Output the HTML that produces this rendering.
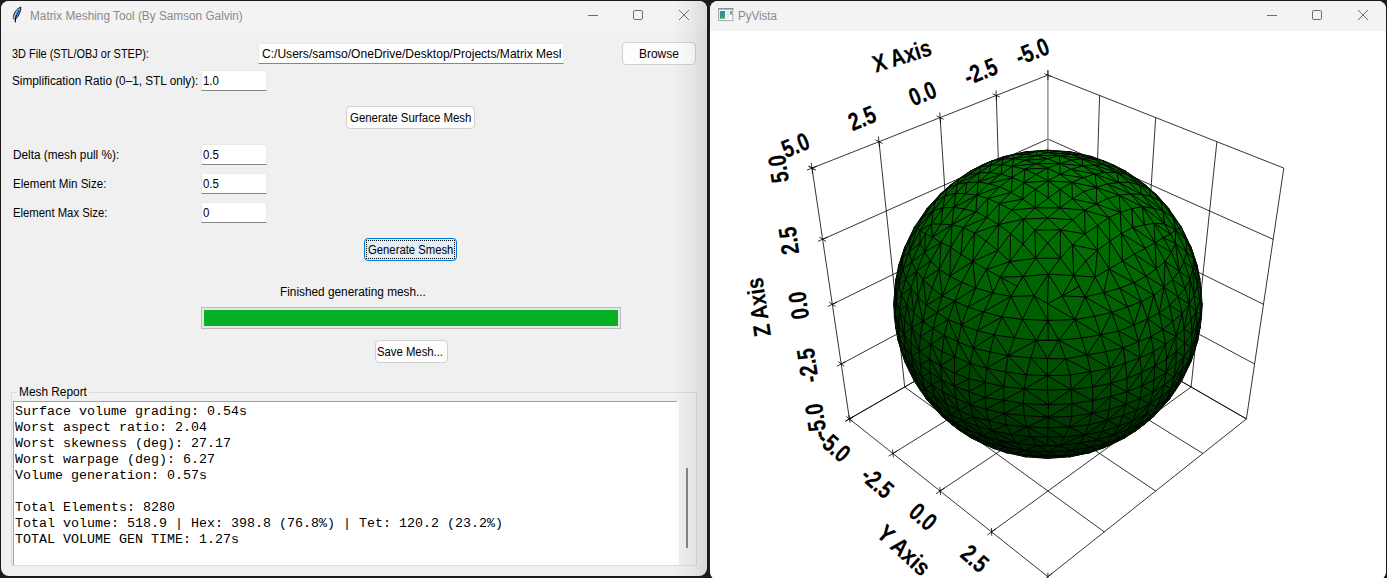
<!DOCTYPE html>
<html><head><meta charset='utf-8'><title>ui</title><style>
*{box-sizing:border-box;margin:0;padding:0}
html,body{width:1387px;height:578px;overflow:hidden;background:#1b1b1b;font-family:"Liberation Sans",sans-serif;}
.win{position:absolute;overflow:hidden}
#w1{left:1px;top:1px;width:706px;height:575px;border-radius:8px;background:#f0f0f0}
#w1 .tb{position:absolute;left:0;top:0;width:100%;height:30px;background:#f3f3f3}
#w2{left:710px;top:1px;width:676px;height:578.6px;border-radius:8px;background:#fff}
#w2 .tb{position:absolute;left:0;top:0;width:100%;height:30px;background:#f3f3f3}
.abs{position:absolute}
.t{position:absolute;white-space:pre;font-size:12px;line-height:16px;height:16px;transform-origin:0 50%;}
.entry{position:absolute;background:#fff;border:1px solid #e9e9e9;border-bottom:1px solid #868686;border-radius:2px 2px 0 0}
.btn{position:absolute;background:#fdfdfd;border:1px solid #d0d0d0;border-radius:4px}
.mono{position:absolute;left:15px;top:403.9px;transform:scaleY(0.9);transform-origin:0 0;font-family:"Liberation Mono",monospace;font-size:13.333px;line-height:17.778px;white-space:pre;color:#000}
</style></head><body>
<div class="win" id="w1"><div class="tb"></div></div>
<div class="win" id="w2"><div class="tb"></div></div>
<!-- left window content, page coordinates -->
<div class="entry" style="left:258px;top:43px;width:306px;height:21px"></div>
<div class="abs" style="left:260px;top:45px;width:301px;height:18px;overflow:hidden"><span class="t" id="pathtxt" style="left:2px;top:0.7px;transform:scaleX(1.0047)">C:/Users/samso/OneDrive/Desktop/Projects/Matrix Meshing</span></div>
<div class="entry" style="left:201px;top:70px;width:66px;height:21px"></div>
<div class="entry" style="left:201px;top:144px;width:66px;height:21px"></div>
<div class="entry" style="left:201px;top:173px;width:66px;height:21px"></div>
<div class="entry" style="left:201px;top:202px;width:66px;height:21px"></div>
<div class="btn" style="left:622px;top:42px;width:74px;height:23px"></div>
<div class="btn" style="left:346px;top:106px;width:129px;height:23px"></div>
<div class="btn" style="left:364px;top:238px;width:93px;height:23px;background:#e0eef9;border-color:#0078d4"></div>
<div class="abs" style="left:366px;top:240px;width:89px;height:19px;border:1px dotted #000;border-radius:1px"></div>
<div class="btn" style="left:375px;top:340px;width:73px;height:23px"></div>
<!-- progress -->
<div class="abs" style="left:201px;top:307px;width:420px;height:22px;background:#e6e6e6;border:1px solid #bcbcbc"></div>
<div class="abs" style="left:204px;top:310px;width:414px;height:16px;background:#06b025"></div>
<!-- group frame -->
<div class="abs" style="left:11px;top:392px;width:686px;height:174px;border:1px solid #dcdcdc"></div>
<div class="abs" style="left:17px;top:384px;width:72px;height:16px;background:#f0f0f0"></div>
<div class="abs" style="left:13px;top:401px;width:666px;height:164px;background:#fff;border-top:1px solid #a0a0a0;border-left:1px solid #a0a0a0"></div>
<div class="abs" style="left:677px;top:401px;width:2px;height:1px;background:#fff"></div>
<div class="abs" style="left:686px;top:468px;width:2px;height:80px;background:#858585"></div>
<div class="mono" style="top:403.9px">Surface volume grading: 0.54s</div>
<div class="mono" style="top:419.9px">Worst aspect ratio: 2.04</div>
<div class="mono" style="top:435.9px">Worst skewness (deg): 27.17</div>
<div class="mono" style="top:451.9px">Worst warpage (deg): 6.27</div>
<div class="mono" style="top:467.9px">Volume generation: 0.57s</div>
<div class="mono" style="top:499.9px">Total Elements: 8280</div>
<div class="mono" style="top:515.9px">Total volume: 518.9 | Hex: 398.8 (76.8%) | Tet: 120.2 (23.2%)</div>
<div class="mono" style="top:531.9px">TOTAL VOLUME GEN TIME: 1.27s</div>
<!-- shadow on right edge of left window -->
<div class="abs" style="left:672px;top:1px;width:35px;height:575px;border-radius:0 8px 8px 0;background:linear-gradient(90deg,rgba(0,0,0,0),rgba(0,0,0,0.035) 50%,rgba(0,0,0,0.10))"></div>
<span class='t' style='left:29.5px;top:8.0px;color:#8a8a8a;transform:scaleX(0.9828)'>Matrix Meshing Tool (By Samson Galvin)</span>
<span class='t' style='left:12.3px;top:45.8px;color:#000;transform:scaleX(0.9125)'>3D File (STL/OBJ or STEP):</span>
<span class='t' style='left:12.3px;top:72.8px;color:#000;transform:scaleX(0.9794)'>Simplification Ratio (0–1, STL only):</span>
<span class='t' style='left:12.5px;top:147.2px;color:#000;transform:scaleX(0.9829)'>Delta (mesh pull %):</span>
<span class='t' style='left:12.5px;top:176.2px;color:#000;transform:scaleX(0.9658)'>Element Min Size:</span>
<span class='t' style='left:12.5px;top:205.2px;color:#000;transform:scaleX(0.9436)'>Element Max Size:</span>
<span class='t' style='left:349.7px;top:109.7px;color:#000;transform:scaleX(0.9529)'>Generate Surface Mesh</span>
<span class='t' style='left:367.9px;top:241.5px;color:#000;transform:scaleX(0.9414)'>Generate Smesh</span>
<span class='t' style='left:639.2px;top:45.7px;color:#000;transform:scaleX(0.9946)'>Browse</span>
<span class='t' style='left:377.4px;top:343.7px;color:#000;transform:scaleX(0.9424)'>Save Mesh...</span>
<span class='t' style='left:280.4px;top:284.2px;color:#000;transform:scaleX(0.9852)'>Finished generating mesh...</span>
<span class='t' style='left:18.7px;top:384.1px;color:#000;transform:scaleX(0.9883)'>Mesh Report</span>
<span class='t' style='left:738.4px;top:8.0px;color:#8a8a8a;transform:scaleX(0.9637)'>PyVista</span>
<span class='t' style='left:203.2px;top:72.8px;color:#000;transform:scaleX(0.9550)'>1.0</span>
<span class='t' style='left:203.2px;top:147.2px;color:#000;transform:scaleX(0.9550)'>0.5</span>
<span class='t' style='left:203.2px;top:176.2px;color:#000;transform:scaleX(0.9550)'>0.5</span>
<span class='t' style='left:203.2px;top:205.2px;color:#000;transform:scaleX(0.9550)'>0</span>
<svg class="abs" style="left:0;top:0" width="1387" height="578" viewBox="0 0 1387 578">
<path d='M588 15.5h10' stroke='#6e6e6e' stroke-width='1' fill='none'/><rect x='633.5' y='10.5' width='9' height='9' rx='1.3' fill='none' stroke='#6e6e6e' stroke-width='1'/><path d='M679 10l10 10M689 10l-10 10' stroke='#6e6e6e' stroke-width='1' fill='none'/>
<path d='M1267 15.5h10' stroke='#6e6e6e' stroke-width='1' fill='none'/><rect x='1312.5' y='10.5' width='9' height='9' rx='1.3' fill='none' stroke='#6e6e6e' stroke-width='1'/><path d='M1358 10l10 10M1368 10l-10 10' stroke='#6e6e6e' stroke-width='1' fill='none'/>
<defs>
<linearGradient id="pvg" x1="0" y1="0" x2="0.6" y2="1"><stop offset="0" stop-color="#4f7fc4"/><stop offset="0.45" stop-color="#2f8f8f"/><stop offset="1" stop-color="#3fae4c"/></linearGradient>
<linearGradient id="pvg2" x1="0" y1="0" x2="0" y2="1"><stop offset="0" stop-color="#5a8fd0"/><stop offset="1" stop-color="#6fc46a"/></linearGradient>
</defs>
<g id="feather">
<path d="M20.9 7.1C17.4 8.2 13.5 12.6 13.2 18.4L15.3 19.3C18.6 16.5 20.9 11.6 20.9 7.1Z" fill="#4a90e8" stroke="#16181c" stroke-width="1" stroke-linejoin="round"/>
<path d="M20.3 7.9C17.4 9 14.3 12.8 13.9 17.9L14.8 18.3C15.2 14.2 17.4 10.4 20.3 7.9Z" fill="#9ccbff"/>
<path d="M18.6 10.8L15.9 16.6" stroke="#0b0b10" stroke-width="1.1" stroke-dasharray="1.3 1" fill="none"/>
<path d="M15.7 16.5L15.3 22.4" stroke="#000" stroke-width="1.1" fill="none"/>
<path d="M13.6 17.2L14.6 18.6" stroke="#fff" stroke-width="0.9"/>
</g>
<g id="pvicon">
<rect x="718.5" y="8.6" width="14.3" height="12" fill="#fdfdfd" stroke="#a3a8b0" stroke-width="1"/>
<rect x="718" y="8" width="15.3" height="1.6" fill="#8d9299"/>
<rect x="719.8" y="11" width="5.3" height="7.7" fill="url(#pvg)"/>
<rect x="726.7" y="11" width="2.2" height="7.7" fill="#e4e4e4"/>
<rect x="730" y="11" width="2" height="3.8" fill="url(#pvg2)"/>
</g>

<defs><clipPath id="vp"><rect x="710" y="31" width="676" height="547"/></clipPath><clipPath id="sc"><circle cx="1047.9" cy="304.3" r="153.6"/></clipPath>
<radialGradient id="sg" cx="0.5" cy="0.36" r="0.66" fx="0.5" fy="0.30"><stop offset="0" stop-color="#007200"/><stop offset="0.35" stop-color="#006800"/><stop offset="0.7" stop-color="#035003"/><stop offset="1" stop-color="#04380a"/></radialGradient></defs>
<g clip-path="url(#vp)">
<path d="M1047.9 304.3L1246.4 418.9M1047.9 304.3L849.4 418.9M1047.9 304.3L1246.4 418.9M1047.9 304.3L849.4 418.9M1003.6 329.9L1202.9 453.5M1092.3 329.9L892.9 453.5M1092.3 329.9L1099.6 95.5M1047.9 253.1L1254.6 364.0M1003.6 329.9L996.3 95.5M1047.9 253.1L841.3 364.0M956.0 357.4L1155.7 491.0M1139.9 357.4L940.1 491.0M1139.9 357.4L1155.7 117.6M1047.9 198.1L1263.5 304.3M956.0 357.4L940.1 117.6M1047.9 198.1L832.4 304.3M904.7 387.0L1104.3 531.9M1191.1 387.0L991.6 531.9M1191.1 387.0L1216.9 141.7M1047.9 139.0L1273.2 239.3M904.7 387.0L879.0 141.7M1047.9 139.0L822.7 239.3M849.4 418.9L1047.9 576.7M1246.4 418.9L1047.9 576.7M1246.4 418.9L1283.8 168.1M1047.9 75.1L1283.8 168.1M849.4 418.9L812.0 168.1M1047.9 75.1L812.0 168.1" stroke="#000" stroke-width="0.8" fill="none"/>
<path d="M1047.9 70.1L1047.9 304.3" stroke="#9a9a9a" stroke-width="1.6" fill="none"/>
<path d="M1047.9 79.9L1047.9 70.3M1051.5 76.5L1044.4 73.7M853.6 416.5L845.3 421.3M852.4 421.3L846.4 416.5M853.6 416.5L845.3 421.3M848.9 415.1L850.0 422.7M996.4 100.4L996.1 90.5M999.8 97.0L992.7 93.9M845.6 361.6L836.9 366.3M844.3 366.3L838.2 361.6M897.1 450.9L888.7 456.1M892.5 449.6L893.4 457.3M940.5 122.7L939.8 112.5M943.7 119.3L936.6 115.9M836.9 302.0L827.8 306.5M835.6 306.5L829.2 302.1M944.4 488.2L935.9 493.8M939.8 487.1L940.5 494.9M879.5 146.9L878.4 136.5M882.5 143.5L875.5 139.9M827.5 237.1L817.9 241.4M826.0 241.4L819.3 237.1M995.9 528.8L987.4 535.0M991.4 528.0L991.8 535.8M812.8 173.5L811.2 162.7M815.5 170.1L808.6 166.1M817.1 166.1L807.0 170.1M815.5 170.1L808.6 166.1M1052.2 573.3L1043.7 580.1M1047.9 572.7L1047.9 580.6" stroke="#000" stroke-width="0.8" fill="none"/>
<circle cx="1047.9" cy="304.3" r="153.6" fill="#004800"/>
<g clip-path="url(#sc)" shape-rendering="crispEdges">
<path d="M971.2 437.9L983.6 444.0L975.8 437.8ZM983.6 444.0L971.2 437.9L994.3 448.7ZM1035.1 456.3L1024.5 450.5L1047.5 455.6ZM1014.2 453.1L1035.1 456.3L1024.5 450.5ZM1014.2 453.1L1035.1 456.3L1020.6 455.4ZM989.5 443.0L983.6 444.0L998.1 449.2ZM989.5 443.0L983.6 444.0L975.8 437.8ZM962.5 431.2L975.8 437.8L968.2 429.8ZM962.5 431.2L971.2 437.9L975.8 437.8ZM962.5 431.2L955.4 423.0L945.0 416.5ZM962.5 431.2L951.5 424.2L945.0 416.5ZM960.0 430.8L951.5 424.2L971.2 437.9ZM962.5 431.2L951.5 424.2L971.2 437.9ZM934.7 408.0L951.5 424.2L945.0 416.5ZM1025.7 456.8L1035.1 456.3L1020.6 455.4ZM927.0 399.8L921.2 390.5L920.5 390.6ZM1047.6 458.4L1035.1 456.3L1060.5 456.2ZM1047.6 458.4L1025.7 456.8L1037.3 457.7ZM1047.6 458.4L1025.7 456.8L1035.1 456.3ZM1070.0 456.8L1047.6 458.4L1059.2 457.6ZM1048.3 451.8L1024.5 450.5L1047.5 455.6ZM983.0 435.7L989.5 443.0L975.8 437.8ZM1005.9 447.4L1014.2 453.1L1024.5 450.5ZM1005.9 447.4L1014.2 453.1L998.1 449.2ZM1005.9 447.4L989.5 443.0L998.1 449.2ZM998.1 449.2L983.6 444.0L1006.8 452.8ZM942.2 416.5L951.5 424.2L960.0 430.8ZM942.2 416.5L934.7 408.0L951.5 424.2ZM927.0 399.8L934.7 408.0L934.0 407.6ZM1097.5 449.3L1080.7 453.5L1090.2 447.3ZM1060.5 456.2L1080.7 453.5L1075.4 455.4ZM1060.5 456.2L1070.0 456.8L1075.4 455.4ZM1060.5 456.2L1080.7 453.5L1071.9 450.4ZM1047.5 455.6L1035.1 456.3L1060.5 456.2ZM1060.5 456.2L1070.0 456.8L1047.6 458.4ZM1060.5 456.2L1048.3 451.8L1047.5 455.6ZM1135.7 431.0L1144.9 423.8L1124.3 438.1ZM942.2 416.5L934.7 408.0L934.0 407.6ZM1089.1 452.8L1080.7 453.5L1075.4 455.4ZM1089.1 452.8L1097.5 449.3L1080.7 453.5ZM1089.1 452.8L1070.0 456.8L1080.8 454.7ZM1089.1 452.8L1070.0 456.8L1075.4 455.4ZM1111.3 444.4L1097.5 449.3L1120.5 437.7ZM994.3 448.7L983.6 444.0L1006.8 452.8ZM1006.8 452.8L1014.2 453.1L998.1 449.2ZM1006.8 452.8L1014.2 453.1L1025.7 456.8ZM1020.6 455.4L1014.2 453.1L1025.7 456.8ZM1006.8 452.8L1014.8 454.6L1025.7 456.8ZM1111.3 444.4L1102.2 448.5L1124.3 438.1ZM1097.5 449.3L1089.1 452.8L1111.3 444.4ZM1102.2 448.5L1089.1 452.8L1111.3 444.4ZM1124.3 438.1L1133.4 431.3L1111.3 444.4Z" fill="#001e00" stroke="#001e00" stroke-width="0.6"/>
<path d="M914.6 381.5L921.2 390.5L920.5 390.6ZM962.5 431.2L955.4 423.0L968.2 429.8ZM934.7 408.0L927.0 399.8L921.2 390.5ZM1080.7 453.5L1071.9 450.4L1090.2 447.3ZM989.5 443.0L983.0 435.7L1005.9 447.4ZM983.0 435.7L975.8 437.8L968.2 429.8ZM1097.5 449.3L1106.5 443.0L1090.2 447.3ZM1060.5 456.2L1048.3 451.8L1071.9 450.4ZM1135.7 431.0L1144.9 423.8L1153.9 416.3ZM1106.5 443.0L1097.5 449.3L1120.5 437.7ZM929.3 398.9L934.7 408.0L945.0 416.5ZM1133.4 431.3L1144.9 423.8L1124.3 438.1ZM1120.5 437.7L1133.4 431.3L1111.3 444.4Z" fill="#002000" stroke="#002000" stroke-width="0.6"/>
<path d="M950.7 414.5L955.4 423.0L945.0 416.5ZM1048.3 451.8L1037.7 445.5L1024.5 450.5ZM998.5 440.1L983.0 435.7L1005.9 447.4ZM1005.9 447.4L1024.5 450.5L998.5 440.1ZM929.3 398.9L934.7 408.0L921.2 390.5Z" fill="#002200" stroke="#002200" stroke-width="0.6"/>
<path d="M968.2 429.8L962.6 420.5L983.0 435.7ZM962.6 420.5L955.4 423.0L968.2 429.8ZM921.2 390.5L914.6 381.5L917.0 380.6ZM914.6 381.5L909.3 371.2L909.8 370.8ZM950.7 414.5L938.2 406.2L945.0 416.5ZM1016.9 443.4L1037.7 445.5L1024.5 450.5ZM1080.1 442.9L1071.9 450.4L1090.2 447.3ZM1016.9 443.4L1024.5 450.5L998.5 440.1ZM1058.7 445.7L1048.3 451.8L1071.9 450.4ZM929.3 398.9L938.2 406.2L945.0 416.5Z" fill="#002400" stroke="#002400" stroke-width="0.6"/>
<path d="M909.8 370.8L914.6 381.5L917.0 380.6ZM1153.9 416.3L1160.8 408.3L1161.4 408.1ZM1160.8 408.3L1144.9 423.8L1153.9 416.3ZM904.9 361.7L909.3 371.2L909.8 370.8ZM950.7 414.5L962.6 420.5L955.4 423.0ZM1097.1 439.7L1106.5 443.0L1090.2 447.3ZM1048.3 451.8L1037.7 445.5L1058.7 445.7ZM983.0 435.7L992.5 430.8L998.5 440.1ZM1058.7 445.7L1080.1 442.9L1071.9 450.4ZM1133.4 431.3L1120.5 437.7L1140.3 423.1ZM1120.5 437.7L1113.3 435.2L1106.5 443.0ZM1144.9 423.8L1151.6 415.9L1133.4 431.3ZM929.3 398.9L921.2 390.5L925.0 388.8Z" fill="#002600" stroke="#002600" stroke-width="0.6"/>
<path d="M1160.8 408.3L1144.9 423.8L1151.6 415.9ZM1169.0 399.7L1160.8 408.3L1161.4 408.1ZM904.9 361.7L901.5 350.3L901.2 350.5ZM998.5 440.1L992.5 430.8L1016.9 443.4ZM1031.0 436.8L1016.9 443.4L1037.7 445.5ZM1080.1 442.9L1097.1 439.7L1090.2 447.3ZM977.5 426.0L962.6 420.5L983.0 435.7ZM983.0 435.7L992.5 430.8L977.5 426.0ZM1113.3 435.2L1097.1 439.7L1106.5 443.0ZM1047.9 445.6L1037.7 445.5L1058.7 445.7ZM1120.5 437.7L1113.3 435.2L1127.4 429.7ZM1140.3 423.1L1151.6 415.9L1133.4 431.3ZM1127.4 429.7L1120.5 437.7L1140.3 423.1ZM938.2 406.2L950.7 414.5L934.5 396.0ZM938.2 406.2L934.5 396.0L929.3 398.9ZM917.0 380.6L921.2 390.5L925.0 388.8Z" fill="#002800" stroke="#002800" stroke-width="0.6"/>
<path d="M906.6 359.6L917.0 380.6L909.8 370.8ZM897.8 339.4L901.5 350.3L901.2 350.5ZM909.8 370.8L906.6 359.6L904.9 361.7ZM1010.8 434.6L992.5 430.8L1016.9 443.4ZM1037.7 445.5L1031.0 436.8L1047.9 445.6ZM1031.0 436.8L1016.9 443.4L1010.8 434.6ZM1080.1 442.9L1085.1 434.6L1058.7 445.7ZM958.9 410.3L950.7 414.5L962.6 420.5ZM1058.7 445.7L1047.9 445.6L1047.5 437.0ZM925.0 388.8L934.5 396.0L929.3 398.9ZM946.1 403.8L950.7 414.5L934.5 396.0Z" fill="#002a00" stroke="#002a00" stroke-width="0.6"/>
<path d="M1160.8 408.3L1175.0 390.2L1169.0 399.7ZM901.5 350.3L906.6 359.6L904.9 361.7ZM977.5 426.0L992.5 430.8L973.5 416.7ZM1127.4 429.7L1132.6 420.8L1113.3 435.2ZM1080.1 442.9L1097.1 439.7L1085.1 434.6ZM1047.5 437.0L1031.0 436.8L1047.9 445.6ZM1169.0 399.7L1175.5 390.5L1175.0 390.2ZM1166.6 399.0L1160.8 408.3L1151.6 415.9ZM1102.2 431.4L1113.3 435.2L1097.1 439.7ZM1064.3 436.9L1085.1 434.6L1058.7 445.7ZM1058.7 445.7L1064.3 436.9L1047.5 437.0ZM1140.3 423.1L1146.4 413.9L1151.6 415.9ZM1140.3 423.1L1127.4 429.7L1146.4 413.9ZM925.0 388.8L917.0 380.6L913.5 368.6ZM946.1 403.8L958.9 410.3L950.7 414.5ZM973.5 416.7L962.6 420.5L977.5 426.0ZM973.5 416.7L958.9 410.3L962.6 420.5Z" fill="#002c00" stroke="#002c00" stroke-width="0.6"/>
<path d="M1146.4 413.9L1151.6 415.9L1156.7 406.8ZM906.6 359.6L917.0 380.6L913.5 368.6ZM901.5 350.3L895.8 327.6L897.8 339.4ZM1181.5 381.2L1175.5 390.5L1175.0 390.2ZM1166.6 399.0L1160.8 408.3L1175.0 390.2ZM1166.6 399.0L1151.6 415.9L1156.7 406.8ZM897.8 339.4L895.8 327.6L896.4 328.4ZM1006.8 424.9L992.5 430.8L1010.8 434.6ZM1119.1 426.0L1132.6 420.8L1113.3 435.2ZM1102.2 431.4L1097.1 439.7L1085.1 434.6ZM1102.2 431.4L1113.3 435.2L1119.1 426.0ZM1132.6 420.8L1127.4 429.7L1146.4 413.9ZM934.5 396.0L931.6 384.7L946.1 403.8ZM925.0 388.8L921.9 377.0L913.5 368.6ZM934.5 396.0L931.6 384.7L925.0 388.8ZM988.9 420.8L992.5 430.8L973.5 416.7Z" fill="#002e00" stroke="#002e00" stroke-width="0.6"/>
<path d="M906.6 359.6L904.6 346.9L913.5 368.6ZM1031.0 436.8L1026.8 426.9L1010.8 434.6ZM1047.9 427.8L1064.3 436.9L1047.5 437.0ZM1031.0 436.8L1047.5 437.0L1026.8 426.9ZM899.5 338.5L901.5 350.3L895.8 327.6ZM906.6 359.6L904.6 346.9L901.5 350.3ZM1006.8 424.9L992.5 430.8L988.9 420.8ZM1006.8 424.9L1026.8 426.9L1010.8 434.6ZM921.9 377.0L931.6 384.7L925.0 388.8ZM946.1 403.8L958.9 410.3L942.7 391.4Z" fill="#003000" stroke="#003000" stroke-width="0.6"/>
<path d="M1149.6 403.8L1146.4 413.9L1156.7 406.8ZM1132.6 420.8L1149.6 403.8L1146.4 413.9ZM1132.6 420.8L1119.1 426.0L1122.8 415.6ZM1047.9 427.8L1047.5 437.0L1026.8 426.9ZM1175.0 390.2L1181.5 381.2L1179.3 380.1ZM921.9 377.0L913.5 368.6L911.6 356.3ZM1166.6 399.0L1170.8 388.9L1156.7 406.8ZM1166.6 399.0L1179.3 380.1L1175.0 390.2ZM899.5 338.5L904.6 346.9L901.5 350.3ZM1102.2 431.4L1107.3 420.2L1119.1 426.0ZM1186.5 371.4L1191.1 361.3L1181.5 381.2ZM942.7 391.4L931.6 384.7L946.1 403.8ZM955.9 398.4L958.9 410.3L942.7 391.4ZM973.5 416.7L970.3 404.6L958.9 410.3ZM973.5 416.7L988.9 420.8L970.3 404.6ZM1102.2 431.4L1085.1 434.6L1107.3 420.2ZM1069.3 427.0L1064.3 436.9L1085.1 434.6Z" fill="#003200" stroke="#003200" stroke-width="0.6"/>
<path d="M1149.6 403.8L1161.1 396.4L1156.7 406.8ZM1170.8 388.9L1161.1 396.4L1156.7 406.8ZM895.8 327.6L895.2 314.4L899.5 338.5ZM911.6 356.3L904.6 346.9L913.5 368.6ZM1107.3 420.2L1119.1 426.0L1122.8 415.6ZM1191.1 361.3L1181.5 381.2L1185.9 371.4ZM931.6 384.7L930.0 372.3L921.9 377.0ZM921.9 377.0L920.4 364.6L911.6 356.3ZM1185.9 371.4L1181.5 381.2L1179.3 380.1ZM1166.6 399.0L1179.3 380.1L1170.8 388.9ZM894.4 317.4L895.2 314.4L893.8 304.2ZM894.4 317.4L895.8 327.6L895.2 314.4ZM1006.8 424.9L1004.2 413.6L988.9 420.8ZM1006.8 424.9L1026.8 426.9L1004.2 413.6ZM1136.9 410.3L1132.6 420.8L1122.8 415.6ZM1136.9 410.3L1132.6 420.8L1149.6 403.8ZM970.3 404.6L958.9 410.3L955.9 398.4ZM986.2 409.3L988.9 420.8L970.3 404.6ZM1088.6 424.8L1085.1 434.6L1107.3 420.2ZM1069.3 427.0L1047.9 427.8L1064.3 436.9ZM1069.3 427.0L1088.6 424.8L1085.1 434.6Z" fill="#003400" stroke="#003400" stroke-width="0.6"/>
<path d="M904.6 346.9L911.6 356.3L904.1 334.4ZM920.4 364.6L930.0 372.3L921.9 377.0ZM898.8 325.1L895.2 314.4L899.5 338.5ZM904.6 346.9L904.1 334.4L899.5 338.5ZM930.0 372.3L931.6 384.7L941.6 379.6ZM942.7 391.4L955.9 398.4L941.6 379.6ZM986.2 409.3L1004.2 413.6L988.9 420.8ZM942.7 391.4L931.6 384.7L941.6 379.6ZM1048.1 417.2L1047.9 427.8L1026.8 426.9ZM1069.3 427.0L1048.1 417.2L1047.9 427.8Z" fill="#003600" stroke="#003600" stroke-width="0.6"/>
<path d="M893.8 304.2L895.2 314.4L894.8 290.2ZM920.4 364.6L911.6 356.3L919.4 351.2ZM898.8 325.1L904.1 334.4L899.5 338.5ZM1179.3 380.1L1170.8 388.9L1182.2 369.0ZM1161.1 396.4L1170.8 388.9L1164.2 384.8ZM1024.2 415.5L1026.8 426.9L1004.2 413.6ZM1189.0 360.5L1179.3 380.1L1185.9 371.4ZM955.9 398.4L970.3 404.6L954.4 386.1ZM1191.1 361.3L1194.5 350.0L1194.6 350.6ZM1194.5 350.0L1191.1 361.3L1185.9 371.4ZM1198.0 339.8L1194.5 350.0L1194.6 350.6ZM986.2 409.3L970.3 404.6L985.1 397.5ZM954.4 386.1L955.9 398.4L941.6 379.6ZM1122.8 415.6L1126.0 404.2L1107.3 420.2ZM1088.6 424.8L1092.3 413.3L1107.3 420.2ZM1088.6 424.8L1092.3 413.3L1069.3 427.0ZM1048.1 417.2L1026.8 426.9L1024.2 415.5Z" fill="#003800" stroke="#003800" stroke-width="0.6"/>
<path d="M930.0 372.3L929.6 359.4L941.6 379.6ZM895.2 314.4L898.8 325.1L896.1 299.8ZM910.9 342.9L911.6 356.3L919.4 351.2ZM920.4 364.6L929.6 359.4L930.0 372.3ZM1161.1 396.4L1149.6 403.8L1164.2 384.8ZM910.9 342.9L911.6 356.3L904.1 334.4ZM1174.0 377.3L1170.8 388.9L1182.2 369.0ZM1174.0 377.3L1170.8 388.9L1164.2 384.8ZM894.8 290.2L893.8 304.2L895.9 279.5ZM1136.9 410.3L1149.6 403.8L1140.1 398.6ZM1136.9 410.3L1126.0 404.2L1122.8 415.6ZM1189.0 360.5L1179.3 380.1L1182.2 369.0ZM970.3 404.6L968.9 391.5L985.1 397.5ZM968.9 391.5L970.3 404.6L954.4 386.1ZM1194.5 350.0L1189.0 360.5L1185.9 371.4ZM1004.2 413.6L1003.7 400.2L986.2 409.3ZM1109.0 409.5L1092.3 413.3L1107.3 420.2ZM1109.0 409.5L1126.0 404.2L1107.3 420.2ZM1071.7 416.4L1092.3 413.3L1069.3 427.0ZM1069.3 427.0L1048.1 417.2L1071.7 416.4Z" fill="#003a00" stroke="#003a00" stroke-width="0.6"/>
<path d="M899.6 310.8L898.8 325.1L896.1 299.8ZM920.4 364.6L929.6 359.4L919.4 351.2ZM1149.6 403.8L1153.0 392.2L1140.1 398.6ZM898.8 325.1L899.6 310.8L904.1 334.4ZM896.1 299.8L895.2 314.4L894.8 290.2ZM1153.0 392.2L1149.6 403.8L1164.2 384.8ZM1004.2 413.6L1023.3 403.5L1024.2 415.5ZM985.1 397.5L1003.7 400.2L986.2 409.3ZM1003.7 400.2L1004.2 413.6L1023.3 403.5ZM1136.9 410.3L1126.0 404.2L1140.1 398.6ZM1198.0 339.8L1200.1 327.3L1199.3 329.5ZM1194.5 350.0L1198.0 339.8L1200.1 327.3ZM941.6 379.6L940.5 365.7L954.4 386.1ZM1024.2 415.5L1023.3 403.5L1048.1 417.2Z" fill="#003c00" stroke="#003c00" stroke-width="0.6"/>
<path d="M894.8 290.2L895.9 279.5L897.6 274.7ZM894.8 290.2L897.6 274.7L896.1 299.8ZM910.9 342.9L919.4 351.2L911.6 327.5ZM1182.2 369.0L1184.1 356.4L1189.0 360.5ZM904.8 319.6L899.6 310.8L904.1 334.4ZM904.1 334.4L910.9 342.9L911.6 327.5ZM1174.0 377.3L1184.1 356.4L1182.2 369.0ZM985.1 397.5L968.9 391.5L985.3 382.6ZM968.9 391.5L968.9 378.8L954.4 386.1ZM1092.3 413.3L1072.0 403.6L1071.7 416.4ZM1194.5 350.0L1196.3 338.0L1189.0 360.5ZM940.5 365.7L929.6 359.4L941.6 379.6ZM954.4 373.1L940.5 365.7L954.4 386.1ZM1071.7 416.4L1072.0 403.6L1048.1 417.2ZM1109.0 409.5L1111.0 396.3L1092.3 413.3ZM1048.5 404.8L1023.3 403.5L1048.1 417.2Z" fill="#003e00" stroke="#003e00" stroke-width="0.6"/>
<path d="M931.1 344.5L929.6 359.4L940.5 365.7ZM896.1 299.8L899.6 310.8L901.5 295.1ZM895.9 279.5L898.6 266.0L897.6 274.7ZM920.3 336.7L919.4 351.2L911.6 327.5ZM929.6 359.4L919.4 351.2L931.1 344.5ZM1140.1 398.6L1141.9 385.8L1153.0 392.2ZM1164.2 384.8L1153.0 392.2L1166.0 372.6ZM904.1 334.4L904.8 319.6L911.6 327.5ZM1174.0 377.3L1184.1 356.4L1175.9 364.1ZM1174.0 377.3L1164.2 384.8L1166.0 372.6ZM968.9 378.8L968.9 391.5L985.3 382.6ZM954.4 373.1L968.9 378.8L954.4 386.1ZM1003.7 400.2L985.1 397.5L1004.0 386.6ZM1191.4 347.2L1184.1 356.4L1189.0 360.5ZM1126.9 391.8L1126.0 404.2L1140.1 398.6ZM1191.4 347.2L1196.3 338.0L1189.0 360.5ZM1194.5 350.0L1200.1 327.3L1196.3 338.0ZM1109.0 409.5L1111.0 396.3L1126.0 404.2ZM1093.0 400.6L1092.3 413.3L1072.0 403.6ZM1093.0 400.6L1111.0 396.3L1092.3 413.3ZM1048.5 404.8L1072.0 403.6L1048.1 417.2Z" fill="#004000" stroke="#004000" stroke-width="0.6"/>
<path d="M904.8 319.6L907.0 304.9L899.6 310.8ZM898.7 285.4L896.1 299.8L901.5 295.1ZM898.7 285.4L897.6 274.7L896.1 299.8ZM920.3 336.7L919.4 351.2L931.1 344.5ZM1154.0 379.9L1153.0 392.2L1166.0 372.6ZM1154.0 379.9L1141.9 385.8L1153.0 392.2ZM954.4 373.1L940.5 365.7L954.8 356.9ZM1174.0 377.3L1175.9 364.1L1166.0 372.6ZM898.6 266.0L901.4 257.4L903.1 253.0ZM1023.3 403.5L1024.2 388.9L1003.7 400.2ZM1023.3 403.5L1024.2 388.9L1048.5 404.8ZM985.3 382.6L985.1 397.5L1004.0 386.6ZM1201.5 317.0L1202.1 303.9L1200.1 327.3ZM1126.9 391.8L1111.0 396.3L1126.0 404.2ZM1126.9 391.8L1141.9 385.8L1140.1 398.6Z" fill="#004200" stroke="#004200" stroke-width="0.6"/>
<path d="M907.0 304.9L899.6 310.8L901.5 295.1ZM902.5 257.9L898.6 266.0L897.6 274.7ZM897.6 274.7L902.5 257.9L898.7 285.4ZM1200.1 327.3L1196.3 338.0L1200.6 314.6ZM904.8 319.6L911.6 327.5L907.0 304.9ZM920.3 336.7L922.9 321.4L911.6 327.5ZM1004.0 386.6L1024.2 388.9L1003.7 400.2ZM904.8 247.1L901.4 257.4L903.1 253.0ZM942.1 351.5L931.1 344.5L940.5 365.7ZM942.1 351.5L940.5 365.7L954.8 356.9ZM970.1 363.2L954.4 373.1L968.9 378.8ZM1184.1 356.4L1184.7 343.1L1191.4 347.2ZM1196.3 338.0L1197.1 325.1L1191.4 347.2ZM985.3 382.6L970.1 363.2L968.9 378.8ZM1200.6 314.6L1202.1 303.9L1200.1 327.3ZM1072.0 403.6L1071.2 389.4L1093.0 400.6ZM1047.5 390.2L1024.2 388.9L1048.5 404.8ZM1048.5 404.8L1071.2 389.4L1072.0 403.6ZM1093.0 400.6L1110.6 383.4L1111.0 396.3Z" fill="#004400" stroke="#004400" stroke-width="0.6"/>
<path d="M1175.9 364.1L1184.1 356.4L1176.3 351.3ZM913.8 312.6L922.9 321.4L911.6 327.5ZM913.8 312.6L911.6 327.5L907.0 304.9ZM931.1 344.5L933.1 328.6L920.3 336.7ZM1184.7 343.1L1184.1 356.4L1176.3 351.3ZM905.7 279.2L898.7 285.4L901.5 295.1ZM970.1 363.2L954.4 373.1L954.8 356.9ZM1191.9 334.1L1197.1 325.1L1191.4 347.2ZM1191.9 334.1L1184.7 343.1L1191.4 347.2ZM903.1 253.0L902.5 257.9L898.6 266.0ZM985.3 382.6L986.7 368.3L1004.0 386.6ZM1197.1 325.1L1196.3 338.0L1200.6 314.6ZM1111.0 396.3L1126.9 391.8L1110.6 383.4ZM1126.9 391.8L1141.5 372.5L1141.9 385.8ZM1048.5 404.8L1071.2 389.4L1047.5 390.2ZM1093.0 400.6L1110.6 383.4L1092.4 387.2ZM1092.4 387.2L1071.2 389.4L1093.0 400.6ZM1175.9 364.1L1166.0 372.6L1176.3 351.3ZM1154.0 379.9L1166.0 372.6L1154.7 365.9ZM1154.7 365.9L1154.0 379.9L1141.9 385.8Z" fill="#004600" stroke="#004600" stroke-width="0.6"/>
<path d="M922.9 321.4L933.1 328.6L920.3 336.7ZM1004.0 386.6L1005.6 371.9L1024.2 388.9ZM902.9 269.1L902.5 257.9L898.7 285.4ZM904.8 247.1L909.7 236.9L914.5 227.1ZM905.7 279.2L898.7 285.4L902.9 269.1ZM986.7 368.3L1004.0 386.6L1005.6 371.9ZM903.1 253.0L902.5 257.9L904.8 247.1ZM911.0 287.6L907.0 304.9L901.5 295.1ZM1047.5 390.2L1024.2 388.9L1047.4 375.7ZM985.3 382.6L970.1 363.2L986.7 368.3ZM944.3 335.2L942.1 351.5L931.1 344.5ZM944.3 335.2L942.1 351.5L954.8 356.9ZM1200.6 314.6L1199.8 300.1L1202.1 303.9ZM1201.0 289.6L1200.9 291.8L1202.1 303.9ZM1126.9 391.8L1127.1 378.3L1141.5 372.5ZM1127.1 378.3L1126.9 391.8L1110.6 383.4ZM1166.5 359.1L1166.0 372.6L1176.3 351.3ZM1154.7 365.9L1141.5 372.5L1141.9 385.8ZM1166.5 359.1L1166.0 372.6L1154.7 365.9Z" fill="#004800" stroke="#004800" stroke-width="0.6"/>
<path d="M1197.1 325.1L1196.2 311.5L1191.9 334.1ZM907.0 304.9L913.8 312.6L911.0 287.6ZM913.8 312.6L917.9 296.6L922.9 321.4ZM970.1 363.2L986.7 368.3L973.4 348.1ZM970.1 363.2L954.8 356.9L958.1 341.9ZM1026.4 374.8L1005.6 371.9L1024.2 388.9ZM1183.9 329.1L1191.9 334.1L1184.7 343.1ZM910.1 239.2L902.5 257.9L904.8 247.1ZM911.0 287.6L905.7 279.2L901.5 295.1ZM1026.4 374.8L1024.2 388.9L1047.4 375.7ZM944.3 335.2L931.1 344.5L933.1 328.6ZM944.3 335.2L954.8 356.9L958.1 341.9ZM1200.6 314.6L1197.1 325.1L1196.2 311.5ZM1200.6 314.6L1199.8 300.1L1196.2 311.5ZM1201.0 289.6L1199.8 300.1L1202.1 303.9ZM1110.6 383.4L1092.4 387.2L1110.1 368.3ZM1071.2 389.4L1092.4 387.2L1090.7 371.7ZM1047.5 390.2L1047.4 375.7L1071.2 389.4Z" fill="#004a00" stroke="#004a00" stroke-width="0.6"/>
<path d="M909.2 251.8L902.5 257.9L910.1 239.2ZM909.2 251.8L902.5 257.9L902.9 269.1ZM926.3 305.2L917.9 296.6L922.9 321.4ZM1092.4 387.2L1090.7 371.7L1110.1 368.3ZM904.8 247.1L914.5 227.1L910.1 239.2ZM1005.6 371.9L1008.2 355.7L986.7 368.3ZM970.1 363.2L958.1 341.9L973.4 348.1ZM1191.1 320.0L1196.2 311.5L1191.9 334.1ZM1026.4 374.8L1008.2 355.7L1005.6 371.9ZM1183.9 329.1L1191.9 334.1L1191.1 320.0ZM911.8 261.9L905.7 279.2L902.9 269.1ZM917.9 296.6L913.8 312.6L911.0 287.6ZM1139.8 357.8L1127.1 378.3L1141.5 372.5ZM1070.2 375.0L1047.4 375.7L1071.2 389.4ZM1175.9 336.2L1176.3 351.3L1184.7 343.1ZM1175.9 336.2L1183.9 329.1L1184.7 343.1ZM1125.3 363.1L1110.6 383.4L1127.1 378.3ZM1198.4 275.2L1201.0 289.6L1199.9 278.9ZM1071.2 389.4L1090.7 371.7L1070.2 375.0ZM1176.3 351.3L1175.9 336.2L1166.5 359.1ZM933.1 328.6L922.9 321.4L937.1 312.5ZM1154.7 365.9L1153.6 351.6L1141.5 372.5ZM1154.7 365.9L1166.5 359.1L1165.7 344.2Z" fill="#004c00" stroke="#004c00" stroke-width="0.6"/>
<path d="M920.6 218.1L914.5 227.1L927.0 208.7ZM926.3 305.2L922.9 321.4L937.1 312.5ZM990.1 351.9L1008.2 355.7L986.7 368.3ZM986.7 368.3L990.1 351.9L973.4 348.1ZM1026.4 374.8L1030.8 357.8L1047.4 375.7ZM911.8 261.9L909.2 251.8L902.9 269.1ZM911.0 287.6L905.7 279.2L916.6 271.0ZM1201.0 289.6L1199.8 300.1L1197.5 285.1ZM1125.3 363.1L1139.8 357.8L1127.1 378.3ZM1125.3 363.1L1110.6 383.4L1110.1 368.3ZM1198.4 275.2L1199.9 278.9L1197.2 265.7ZM948.2 319.5L944.3 335.2L958.1 341.9ZM944.3 335.2L933.1 328.6L948.2 319.5ZM1153.6 351.6L1139.8 357.8L1141.5 372.5ZM1165.7 344.2L1175.9 336.2L1166.5 359.1ZM1154.7 365.9L1153.6 351.6L1165.7 344.2Z" fill="#004e00" stroke="#004e00" stroke-width="0.6"/>
<path d="M914.5 227.1L910.1 239.2L917.2 228.2ZM1191.1 320.0L1189.2 304.2L1196.2 311.5ZM1047.4 375.7L1070.2 375.0L1065.6 358.8ZM917.9 296.6L926.3 305.2L923.2 279.6ZM961.4 324.9L958.1 341.9L973.4 348.1ZM1191.1 320.0L1189.2 304.2L1183.9 329.1ZM910.1 239.2L917.2 228.2L909.2 251.8ZM1199.8 300.1L1194.0 295.4L1196.2 311.5ZM1199.8 300.1L1194.0 295.4L1197.5 285.1ZM1026.4 374.8L1008.2 355.7L1030.8 357.8ZM1047.5 358.6L1047.4 375.7L1065.6 358.8ZM1047.5 358.6L1030.8 357.8L1047.4 375.7ZM1070.2 375.0L1065.6 358.8L1090.7 371.7ZM911.8 261.9L905.7 279.2L916.6 271.0ZM911.0 287.6L917.9 296.6L916.6 271.0ZM1090.7 371.7L1110.1 368.3L1086.9 355.1ZM1175.9 336.2L1183.9 329.1L1182.3 313.3ZM1198.4 275.2L1201.0 289.6L1197.5 285.1ZM948.2 319.5L961.4 324.9L958.1 341.9ZM937.1 312.5L933.1 328.6L948.2 319.5Z" fill="#005000" stroke="#005000" stroke-width="0.6"/>
<path d="M914.5 227.1L922.3 218.0L927.0 208.7ZM914.5 227.1L922.3 218.0L917.2 228.2ZM1194.7 258.3L1191.1 247.3L1197.2 265.7ZM1194.0 295.4L1189.2 304.2L1196.2 311.5ZM932.2 287.9L926.3 305.2L923.2 279.6ZM994.2 334.9L1008.2 355.7L990.1 351.9ZM1086.9 355.1L1065.6 358.8L1090.7 371.7ZM1182.3 313.3L1189.2 304.2L1183.9 329.1ZM911.8 261.9L920.1 243.3L909.2 251.8ZM923.2 279.6L917.9 296.6L916.6 271.0ZM977.5 330.7L961.4 324.9L973.4 348.1ZM977.5 330.7L973.4 348.1L994.2 334.9ZM990.1 351.9L973.4 348.1L994.2 334.9ZM1105.9 351.7L1110.1 368.3L1086.9 355.1ZM1105.9 351.7L1123.3 347.8L1110.1 368.3ZM1175.9 336.2L1172.8 321.6L1182.3 313.3ZM1125.3 363.1L1123.3 347.8L1110.1 368.3ZM1125.3 363.1L1139.8 357.8L1123.3 347.8ZM1197.2 265.7L1192.6 252.4L1198.4 275.2ZM1165.7 344.2L1175.9 336.2L1162.8 329.6ZM937.1 312.5L942.3 295.9L926.3 305.2ZM1153.6 351.6L1151.0 336.6L1139.8 357.8ZM1153.6 351.6L1165.7 344.2L1151.0 336.6Z" fill="#005200" stroke="#005200" stroke-width="0.6"/>
<path d="M1197.5 285.1L1192.9 268.9L1194.0 295.4ZM1192.6 252.4L1191.1 247.3L1197.2 265.7ZM920.1 230.4L920.1 243.3L909.2 251.8ZM920.1 230.4L917.2 228.2L909.2 251.8ZM931.0 204.7L922.3 218.0L927.0 208.7ZM994.2 334.9L1008.2 355.7L1014.4 337.9ZM1193.5 258.3L1192.6 252.4L1198.4 275.2ZM1030.8 357.8L1008.2 355.7L1036.4 340.4ZM1047.5 358.6L1058.8 340.2L1065.6 358.8ZM1047.5 358.6L1036.4 340.4L1030.8 357.8ZM924.7 252.1L911.8 261.9L916.6 271.0ZM940.3 194.0L933.9 201.0L927.0 208.7ZM942.3 295.9L926.3 305.2L932.2 287.9ZM1198.4 275.2L1197.5 285.1L1193.5 258.3ZM1138.5 341.7L1139.8 357.8L1123.3 347.8ZM948.2 319.5L954.8 301.1L961.4 324.9ZM942.3 295.9L954.8 301.1L937.1 312.5ZM1172.8 321.6L1175.9 336.2L1162.8 329.6ZM1151.0 336.6L1138.5 341.7L1139.8 357.8ZM948.2 319.5L954.8 301.1L937.1 312.5ZM1162.8 329.6L1165.7 344.2L1151.0 336.6Z" fill="#005400" stroke="#005400" stroke-width="0.6"/>
<path d="M1190.2 279.2L1192.9 268.9L1194.0 295.4ZM1194.0 295.4L1189.2 304.2L1190.2 279.2ZM1182.3 313.3L1178.1 296.8L1189.2 304.2ZM923.2 279.6L916.6 271.0L930.6 261.1ZM923.2 279.6L939.3 269.2L932.2 287.9ZM1014.4 337.9L1008.2 355.7L1036.4 340.4ZM924.7 252.1L916.6 271.0L930.6 261.1ZM924.7 252.1L911.8 261.9L920.1 243.3ZM933.5 210.3L922.3 218.0L917.2 228.2ZM935.5 201.1L931.0 204.7L922.3 218.0ZM940.3 194.0L927.0 208.7L935.5 201.1ZM931.0 204.7L927.0 208.7L935.5 201.1ZM977.5 330.7L983.6 311.9L961.4 324.9ZM1186.3 237.4L1181.4 227.2L1191.1 247.3ZM1047.5 358.6L1058.8 340.2L1036.4 340.4ZM1065.6 358.8L1058.8 340.2L1086.9 355.1ZM1105.9 351.7L1086.9 355.1L1100.5 334.9ZM1105.9 351.7L1123.3 347.8L1100.5 334.9ZM1192.9 268.9L1197.5 285.1L1193.5 258.3ZM954.8 301.1L968.0 307.2L961.4 324.9ZM1159.2 313.1L1162.8 329.6L1172.8 321.6ZM1123.3 347.8L1118.4 331.1L1138.5 341.7ZM1151.0 336.6L1162.8 329.6L1147.7 318.7ZM1169.6 305.2L1172.8 321.6L1182.3 313.3Z" fill="#005600" stroke="#005600" stroke-width="0.6"/>
<path d="M1185.0 288.1L1178.1 296.8L1189.2 304.2ZM1185.0 288.1L1189.2 304.2L1190.2 279.2ZM920.1 243.3L925.5 233.7L924.7 252.1ZM923.2 279.6L939.3 269.2L930.6 261.1ZM920.1 230.4L920.1 243.3L925.5 233.7ZM1186.0 239.6L1192.6 252.4L1191.1 247.3ZM1186.0 239.6L1193.5 258.3L1192.6 252.4ZM932.2 287.9L939.3 269.2L942.3 295.9ZM933.5 210.3L920.1 230.4L917.2 228.2ZM935.5 201.1L933.5 210.3L922.3 218.0ZM983.6 311.9L977.5 330.7L1002.1 316.8ZM968.0 307.2L983.6 311.9L961.4 324.9ZM1002.1 316.8L994.2 334.9L1014.4 337.9ZM994.2 334.9L977.5 330.7L1002.1 316.8ZM1048.3 340.2L1058.8 340.2L1036.4 340.4ZM1081.5 338.0L1058.8 340.2L1086.9 355.1ZM1081.5 338.0L1086.9 355.1L1100.5 334.9ZM1118.4 331.1L1123.3 347.8L1100.5 334.9ZM1134.0 325.2L1118.4 331.1L1138.5 341.7ZM1169.6 305.2L1159.2 313.1L1172.8 321.6ZM1169.6 305.2L1182.3 313.3L1178.1 296.8ZM1159.2 313.1L1162.8 329.6L1147.7 318.7ZM1147.7 318.7L1134.0 325.2L1138.5 341.7ZM1147.7 318.7L1151.0 336.6L1138.5 341.7Z" fill="#005800" stroke="#005800" stroke-width="0.6"/>
<path d="M1183.9 261.5L1190.2 279.2L1192.9 268.9ZM1185.0 288.1L1190.2 279.2L1179.3 271.2ZM920.1 230.4L931.4 223.9L925.5 233.7ZM1186.0 239.6L1181.4 227.2L1191.1 247.3ZM1036.4 340.4L1022.5 319.4L1014.4 337.9ZM932.5 237.4L925.5 233.7L924.7 252.1ZM933.5 210.3L920.1 230.4L931.4 223.9ZM940.3 194.0L947.4 188.7L950.3 185.2ZM940.3 194.0L935.5 201.1L947.4 188.7ZM1186.7 252.2L1193.5 258.3L1192.9 268.9ZM1186.7 252.2L1186.0 239.6L1193.5 258.3ZM949.9 276.2L939.3 269.2L942.3 295.9ZM1002.1 316.8L1022.5 319.4L1014.4 337.9ZM1048.3 340.2L1047.9 320.4L1058.8 340.2ZM1048.3 340.2L1036.4 340.4L1047.9 320.4ZM968.0 307.2L975.7 287.9L954.8 301.1ZM949.9 276.2L962.0 282.4L942.3 295.9ZM954.8 301.1L962.0 282.4L942.3 295.9Z" fill="#005a00" stroke="#005a00" stroke-width="0.6"/>
<path d="M1183.9 261.5L1190.2 279.2L1179.3 271.2ZM932.5 237.4L931.4 223.9L925.5 233.7ZM930.6 261.1L939.3 269.2L941.1 242.4ZM1185.0 288.1L1172.5 279.7L1178.1 296.8ZM1168.8 208.7L1181.4 227.2L1175.3 218.1ZM1186.0 239.6L1181.4 227.2L1178.7 228.4ZM983.6 311.9L992.9 293.0L968.0 307.2ZM962.0 282.4L975.7 287.9L954.8 301.1ZM1036.4 340.4L1022.5 319.4L1047.9 320.4ZM1118.4 331.1L1100.5 334.9L1111.8 312.3ZM1074.9 319.6L1047.9 320.4L1058.8 340.2ZM924.7 252.1L941.1 242.4L930.6 261.1ZM924.7 252.1L941.1 242.4L932.5 237.4ZM959.0 178.8L947.4 188.7L950.3 185.2ZM959.0 178.8L950.3 185.2L970.5 171.0ZM935.5 201.1L947.4 188.7L945.0 196.2ZM935.5 201.1L933.5 210.3L945.0 196.2ZM1186.7 252.2L1183.9 261.5L1192.9 268.9ZM1081.5 338.0L1074.9 319.6L1058.8 340.2ZM1081.5 338.0L1100.5 334.9L1074.9 319.6ZM1118.4 331.1L1111.8 312.3L1134.0 325.2ZM1169.6 305.2L1164.0 287.1L1178.1 296.8ZM1169.6 305.2L1164.0 287.1L1159.2 313.1ZM1147.7 318.7L1134.0 325.2L1141.3 301.5ZM1147.7 318.7L1153.8 295.2L1159.2 313.1Z" fill="#005c00" stroke="#005c00" stroke-width="0.6"/>
<path d="M1181.4 227.2L1173.2 217.3L1178.7 228.4ZM939.3 269.2L950.8 247.2L949.9 276.2ZM1185.0 288.1L1172.5 279.7L1179.3 271.2ZM1168.8 208.7L1181.4 227.2L1173.2 217.3ZM950.8 247.2L939.3 269.2L941.1 242.4ZM975.7 287.9L992.9 293.0L968.0 307.2ZM957.2 184.1L959.0 178.8L947.4 188.7ZM1186.7 252.2L1175.6 229.9L1186.0 239.6ZM1002.1 316.8L1022.5 319.4L1010.9 296.4ZM992.9 293.0L1010.9 296.4L983.6 311.9ZM1002.1 316.8L1010.9 296.4L983.6 311.9ZM1094.6 316.3L1100.5 334.9L1111.8 312.3ZM1094.6 316.3L1100.5 334.9L1074.9 319.6ZM942.9 207.8L933.5 210.3L931.4 223.9ZM942.9 207.8L933.5 210.3L945.0 196.2ZM940.7 224.1L932.5 237.4L931.4 223.9ZM1164.0 287.1L1172.5 279.7L1178.1 296.8ZM1134.0 325.2L1127.6 306.8L1141.3 301.5ZM1127.6 306.8L1111.8 312.3L1134.0 325.2ZM1153.8 295.2L1164.0 287.1L1159.2 313.1ZM1147.7 318.7L1153.8 295.2L1141.3 301.5Z" fill="#005e00" stroke="#005e00" stroke-width="0.6"/>
<path d="M962.0 282.4L972.7 261.5L975.7 287.9ZM962.0 282.4L972.7 261.5L949.9 276.2ZM1165.0 261.5L1172.5 279.7L1179.3 271.2ZM1168.8 208.7L1156.1 194.5L1162.0 200.9ZM1168.8 208.7L1164.9 204.6L1173.2 217.3ZM960.9 254.4L972.7 261.5L949.9 276.2ZM960.9 254.4L950.8 247.2L949.9 276.2ZM1022.5 319.4L1034.0 295.8L1010.9 296.4ZM1022.5 319.4L1034.0 295.8L1047.9 320.4ZM1074.9 319.6L1047.9 320.4L1047.6 303.7ZM957.2 184.1L947.4 188.7L945.0 196.2ZM970.5 171.0L959.0 178.8L968.9 174.7ZM1186.7 252.2L1183.9 261.5L1175.4 243.1ZM1178.7 228.4L1175.6 229.9L1186.0 239.6ZM1183.9 261.5L1179.3 271.2L1175.4 243.1ZM940.7 224.1L932.5 237.4L952.0 224.7ZM941.1 242.4L932.5 237.4L952.0 224.7ZM940.7 224.1L942.9 207.8L931.4 223.9Z" fill="#006000" stroke="#006000" stroke-width="0.6"/>
<path d="M986.4 269.4L972.7 261.5L975.7 287.9ZM1172.5 279.7L1165.0 261.5L1164.0 287.1ZM1168.8 208.7L1156.1 194.5L1164.9 204.6ZM992.9 293.0L1000.4 277.1L1010.9 296.4ZM992.9 293.0L986.4 269.4L975.7 287.9ZM1047.6 303.7L1034.0 295.8L1047.9 320.4ZM1111.8 312.3L1103.7 292.6L1127.6 306.8ZM1074.9 319.6L1062.1 295.9L1084.9 296.9ZM1074.9 319.6L1062.1 295.9L1047.6 303.7ZM957.2 184.1L955.9 193.2L945.0 196.2ZM957.2 184.1L959.0 178.8L968.9 174.7ZM991.9 161.0L982.0 165.0L1003.5 156.7ZM1186.7 252.2L1175.6 229.9L1175.4 243.1ZM952.0 224.7L941.1 242.4L950.8 247.2ZM1141.3 301.5L1133.9 282.7L1153.8 295.2ZM1094.6 316.3L1074.9 319.6L1084.9 296.9ZM1094.6 316.3L1111.8 312.3L1084.9 296.9ZM1171.5 252.4L1165.0 261.5L1179.3 271.2ZM1171.5 252.4L1179.3 271.2L1175.4 243.1ZM1178.7 228.4L1173.2 217.3L1175.6 229.9ZM1160.5 201.3L1164.9 204.6L1173.2 217.3ZM942.9 207.8L955.9 193.2L945.0 196.2ZM980.7 166.9L970.5 171.0L968.9 174.7ZM982.0 165.0L970.5 171.0L991.9 161.0ZM980.7 166.9L970.5 171.0L991.9 161.0ZM940.7 224.1L942.9 207.8L953.8 207.5ZM1127.6 306.8L1119.8 288.2L1141.3 301.5ZM1153.8 295.2L1164.0 287.1L1146.1 276.1Z" fill="#006200" stroke="#006200" stroke-width="0.6"/>
<path d="M960.9 254.4L974.6 233.0L972.7 261.5ZM950.8 247.2L960.9 254.4L963.3 227.6ZM1048.4 274.1L1034.0 295.8L1047.6 303.7ZM1170.5 234.0L1175.6 229.9L1175.4 243.1ZM1016.9 286.2L1000.4 277.1L1010.9 296.4ZM1016.9 286.2L1010.9 296.4L1023.2 276.5ZM1034.0 295.8L1010.9 296.4L1023.2 276.5ZM992.9 293.0L1000.4 277.1L986.4 269.4ZM952.0 224.7L963.3 227.6L950.8 247.2ZM1103.7 292.6L1111.8 312.3L1084.9 296.9ZM1171.5 252.4L1163.3 237.7L1175.4 243.1ZM1162.7 210.7L1173.2 217.3L1175.6 229.9ZM1160.5 201.3L1149.1 189.2L1164.9 204.6ZM1156.1 194.5L1149.1 189.2L1164.9 204.6ZM1160.5 201.3L1162.7 210.7L1173.2 217.3ZM942.9 207.8L955.9 193.2L953.8 207.5ZM966.7 182.6L957.2 184.1L955.9 193.2ZM968.9 174.7L979.2 172.7L957.2 184.1ZM1146.1 185.5L1156.1 194.5L1137.1 179.0ZM1025.9 151.8L1015.4 154.0L1003.5 156.7ZM940.7 224.1L952.0 224.7L953.8 207.5ZM1119.8 288.2L1103.7 292.6L1127.6 306.8ZM1133.9 282.7L1119.8 288.2L1141.3 301.5ZM1156.3 268.7L1165.0 261.5L1164.0 287.1ZM1164.0 287.1L1146.1 276.1L1156.3 268.7ZM1146.1 276.1L1133.9 282.7L1153.8 295.2Z" fill="#006400" stroke="#006400" stroke-width="0.6"/>
<path d="M974.6 233.0L960.9 254.4L963.3 227.6ZM986.4 269.4L972.7 261.5L997.8 250.4ZM1149.1 189.2L1156.1 194.5L1137.1 179.0ZM1000.4 277.1L1010.0 261.7L986.4 269.4ZM1000.4 277.1L1023.2 276.5L1010.0 261.7ZM1048.4 274.1L1023.2 276.5L1034.0 295.8ZM1119.8 288.2L1133.9 282.7L1109.0 268.9ZM1170.5 234.0L1175.6 229.9L1164.8 224.0ZM1016.9 286.2L1000.4 277.1L1023.2 276.5ZM1062.1 295.9L1048.4 274.1L1047.6 303.7ZM1165.0 261.5L1156.3 268.7L1155.1 242.8ZM1079.1 286.5L1073.7 275.6L1084.9 296.9ZM1079.1 286.5L1062.1 295.9L1073.7 275.6ZM1079.1 286.5L1062.1 295.9L1084.9 296.9ZM1103.7 292.6L1084.9 296.9L1095.1 277.0ZM1103.7 292.6L1109.0 268.9L1119.8 288.2ZM1163.3 237.7L1170.5 234.0L1175.4 243.1ZM965.4 193.8L955.9 193.2L953.8 207.5ZM991.9 161.0L1003.0 158.9L1003.5 156.7ZM952.0 224.7L964.3 208.9L953.8 207.5ZM1171.5 252.4L1165.0 261.5L1155.1 242.8ZM1171.5 252.4L1163.3 237.7L1155.1 242.8ZM1162.7 210.7L1175.6 229.9L1164.8 224.0ZM1160.5 201.3L1151.0 196.4L1149.1 189.2ZM966.7 182.6L979.2 172.7L957.2 184.1ZM966.7 182.6L965.4 193.8L955.9 193.2ZM980.7 166.9L991.9 161.0L990.7 165.2ZM980.7 166.9L968.9 174.7L979.2 172.7ZM1137.1 179.0L1146.1 185.5L1125.3 171.0ZM1025.9 151.8L1014.0 154.5L1003.5 156.7Z" fill="#006600" stroke="#006600" stroke-width="0.6"/>
<path d="M986.0 241.0L974.6 233.0L972.7 261.5ZM972.7 261.5L986.0 241.0L997.8 250.4ZM1010.0 261.7L986.4 269.4L997.8 250.4ZM1023.2 276.5L1010.0 261.7L1035.7 258.2ZM1133.9 282.7L1122.6 261.1L1146.1 276.1ZM1122.6 261.1L1133.9 282.7L1109.0 268.9ZM964.3 208.9L975.9 211.7L952.0 224.7ZM1062.1 295.9L1048.4 274.1L1073.7 275.6ZM1145.3 248.3L1156.3 268.7L1155.1 242.8ZM1134.4 254.0L1122.6 261.1L1146.1 276.1ZM1146.1 276.1L1156.3 268.7L1134.4 254.0ZM1145.3 248.3L1156.3 268.7L1134.4 254.0ZM1095.1 277.0L1073.7 275.6L1084.9 296.9ZM1103.7 292.6L1109.0 268.9L1095.1 277.0ZM1164.8 224.0L1153.9 223.3L1170.5 234.0ZM1163.3 237.7L1153.9 223.3L1170.5 234.0ZM965.4 193.8L953.8 207.5L977.0 195.2ZM964.3 208.9L953.8 207.5L977.0 195.2ZM991.9 161.0L990.7 165.2L1003.0 158.9ZM1125.3 171.0L1115.6 167.0L1113.7 165.0ZM1092.0 156.6L1103.4 160.8L1101.6 160.5ZM1092.0 156.6L1081.8 154.6L1081.1 154.1ZM1014.0 154.5L1003.0 158.9L1003.5 156.7ZM1059.5 150.8L1047.4 150.2L1069.7 151.7ZM963.3 227.6L975.9 211.7L952.0 224.7ZM1162.7 210.7L1153.5 208.3L1164.8 224.0ZM1160.5 201.3L1162.7 210.7L1151.0 196.4ZM1139.7 185.1L1151.0 196.4L1149.1 189.2ZM966.7 182.6L978.2 182.0L979.2 172.7ZM966.7 182.6L965.4 193.8L978.2 182.0ZM980.7 166.9L990.7 165.2L979.2 172.7ZM1137.1 179.0L1149.1 189.2L1127.2 174.6ZM1025.9 151.8L1014.0 154.5L1037.1 151.3ZM1025.9 151.8L1047.4 150.2L1037.3 150.7ZM1127.2 174.6L1137.1 179.0L1125.3 171.0Z" fill="#006800" stroke="#006800" stroke-width="0.6"/>
<path d="M989.7 172.6L978.2 182.0L979.2 172.7ZM990.7 165.2L989.7 172.6L979.2 172.7ZM975.9 211.7L963.3 227.6L986.9 217.5ZM998.7 224.6L986.0 241.0L974.6 233.0ZM1085.8 261.0L1095.1 277.0L1073.7 275.6ZM1048.4 274.1L1060.3 258.3L1073.7 275.6ZM1048.4 274.1L1060.3 258.3L1035.7 258.2ZM1048.4 274.1L1023.2 276.5L1035.7 258.2ZM1109.0 268.9L1097.4 250.1L1095.1 277.0ZM1153.5 208.3L1142.3 206.6L1164.8 224.0ZM1153.9 223.3L1142.3 206.6L1164.8 224.0ZM1115.6 167.0L1103.4 160.8L1113.7 165.0ZM1103.4 160.8L1093.5 158.9L1092.0 156.6ZM964.3 208.9L977.0 195.2L975.9 211.7ZM974.6 233.0L963.3 227.6L986.9 217.5ZM986.0 241.0L997.8 250.4L998.7 224.6ZM1163.3 237.7L1155.1 242.8L1153.9 223.3ZM1151.0 196.4L1141.5 194.3L1162.7 210.7ZM965.4 193.8L977.0 195.2L978.2 182.0ZM1047.4 150.2L1069.7 151.7L1059.5 151.4ZM1002.0 164.6L990.7 165.2L1003.0 158.9ZM1025.0 154.5L1014.0 154.5L1037.1 151.3ZM1003.0 158.9L1013.7 158.6L1014.0 154.5ZM997.8 250.4L1010.0 261.7L1010.6 233.5ZM1023.0 244.3L1010.0 261.7L1035.7 258.2ZM1153.5 208.3L1141.5 194.3L1162.7 210.7ZM1069.7 151.7L1081.8 154.6L1081.1 154.1ZM1025.9 151.8L1047.4 150.2L1037.1 151.3ZM1139.7 185.1L1149.1 189.2L1127.2 174.6ZM1127.2 174.6L1125.3 171.0L1115.6 167.0Z" fill="#006a00" stroke="#006a00" stroke-width="0.6"/>
<path d="M989.7 172.6L1001.2 174.2L978.2 182.0ZM988.7 183.8L1001.2 174.2L978.2 182.0ZM977.0 195.2L988.7 183.8L978.2 182.0ZM1085.8 261.0L1073.7 275.6L1072.5 244.8ZM1097.4 250.1L1109.9 241.2L1109.0 268.9ZM1134.4 254.0L1121.4 233.5L1122.6 261.1ZM1122.6 261.1L1109.9 241.2L1109.0 268.9ZM1085.8 261.0L1097.4 250.1L1095.1 277.0ZM1144.4 224.8L1142.3 206.6L1153.9 223.3ZM1144.4 224.8L1155.1 242.8L1153.9 223.3ZM1115.6 167.0L1104.4 164.8L1127.2 174.6ZM1104.4 164.8L1103.4 160.8L1093.5 158.9ZM1104.4 164.8L1115.6 167.0L1103.4 160.8ZM1081.8 154.6L1070.8 154.3L1069.7 151.7ZM1059.5 151.4L1070.8 154.3L1069.7 151.7ZM1059.5 151.4L1047.9 152.6L1047.4 150.2ZM986.9 217.5L998.7 224.6L974.6 233.0ZM1010.6 233.5L997.8 250.4L998.7 224.6ZM1144.4 224.8L1132.8 227.5L1155.1 242.8ZM1145.3 248.3L1132.8 227.5L1155.1 242.8ZM1145.3 248.3L1134.4 254.0L1121.4 233.5ZM1060.3 258.3L1073.7 275.6L1072.5 244.8ZM1081.8 154.6L1093.5 158.9L1092.0 156.6ZM1037.1 151.3L1047.9 152.6L1047.4 150.2ZM1002.0 164.6L990.7 165.2L989.7 172.6ZM1002.0 164.6L1013.7 158.6L1003.0 158.9ZM1002.0 164.6L989.7 172.6L1001.2 174.2ZM1025.0 154.5L1036.3 155.6L1037.1 151.3ZM1025.0 154.5L1013.7 158.6L1014.0 154.5ZM1023.0 244.3L1010.0 261.7L1010.6 233.5ZM1139.7 185.1L1128.7 182.2L1141.5 194.3ZM1139.7 185.1L1151.0 196.4L1141.5 194.3ZM987.8 198.5L977.0 195.2L975.9 211.7ZM1047.6 243.0L1060.3 258.3L1035.7 258.2ZM1127.2 174.6L1116.8 172.4L1139.7 185.1ZM975.9 211.7L986.9 217.5L987.8 198.5Z" fill="#006c00" stroke="#006c00" stroke-width="0.6"/>
<path d="M1047.9 152.6L1036.3 155.6L1059.4 155.6ZM1047.9 152.6L1070.8 154.3L1059.4 155.6ZM1047.9 152.6L1070.8 154.3L1059.5 151.4ZM1109.9 241.2L1121.4 233.5L1122.6 261.1ZM1141.5 194.3L1153.5 208.3L1130.5 193.9ZM1082.2 158.7L1104.4 164.8L1093.5 158.9ZM1081.8 154.6L1093.5 158.9L1070.8 154.3ZM1082.2 158.7L1093.5 158.9L1070.8 154.3ZM1013.7 158.6L1025.1 160.3L1012.5 166.3ZM1145.3 248.3L1132.8 227.5L1121.4 233.5ZM1142.3 206.6L1153.5 208.3L1130.5 193.9ZM1128.7 182.2L1118.9 182.6L1141.5 194.3ZM1131.8 208.7L1144.4 224.8L1142.3 206.6ZM1131.8 208.7L1144.4 224.8L1132.8 227.5ZM1072.5 244.8L1085.8 261.0L1097.4 250.1ZM1002.0 164.6L1013.7 158.6L1012.5 166.3ZM1002.0 164.6L1012.5 166.3L1001.2 174.2ZM1025.0 154.5L1036.3 155.6L1013.7 158.6ZM1025.1 160.3L1036.3 155.6L1013.7 158.6ZM1047.9 152.6L1036.3 155.6L1037.1 151.3ZM988.7 183.8L977.0 195.2L999.7 186.7ZM1047.6 243.0L1035.7 258.2L1034.8 230.1ZM1072.5 244.8L1060.3 258.3L1060.5 229.9ZM1047.6 243.0L1060.3 258.3L1060.5 229.9ZM1034.8 230.1L1023.0 244.3L1023.4 219.1ZM1023.0 244.3L1035.7 258.2L1034.8 230.1ZM1001.2 174.2L988.7 183.8L1012.2 177.5ZM987.8 198.5L977.0 195.2L999.7 186.7ZM1011.8 210.1L998.7 224.6L999.3 203.5ZM1116.8 172.4L1104.4 164.8L1127.2 174.6ZM1128.7 182.2L1116.8 172.4L1139.7 185.1ZM1010.6 233.5L1023.0 244.3L1023.4 219.1ZM1023.4 219.1L1010.6 233.5L998.7 224.6ZM986.9 217.5L998.7 224.6L999.3 203.5ZM999.3 203.5L986.9 217.5L987.8 198.5Z" fill="#006e00" stroke="#006e00" stroke-width="0.6"/>
<path d="M1047.5 158.6L1036.3 155.6L1059.4 155.6ZM1025.1 160.3L1047.5 158.6L1036.3 155.6ZM1025.1 160.3L1035.9 163.6L1047.5 158.6ZM1025.1 160.3L1012.5 166.3L1035.9 163.6ZM1025.0 169.3L1012.5 166.3L1035.9 163.6ZM1121.4 233.5L1109.9 241.2L1109.1 217.4ZM1109.9 241.2L1097.7 225.4L1097.4 250.1ZM1085.0 233.9L1097.7 225.4L1097.4 250.1ZM1105.3 172.5L1116.8 172.4L1118.9 182.6ZM1104.4 164.8L1094.0 165.0L1116.8 172.4ZM1105.3 172.5L1094.0 165.0L1116.8 172.4ZM1128.7 182.2L1116.8 172.4L1118.9 182.6ZM1082.2 158.7L1071.4 160.1L1059.4 155.6ZM1082.2 158.7L1070.8 154.3L1059.4 155.6ZM1082.2 158.7L1104.4 164.8L1094.0 165.0ZM1130.5 193.9L1118.9 182.6L1141.5 194.3ZM1130.5 193.9L1142.3 206.6L1119.2 195.3ZM1097.7 225.4L1109.9 241.2L1109.1 217.4ZM1072.5 244.8L1060.5 229.9L1085.0 233.9ZM1072.5 244.8L1097.4 250.1L1085.0 233.9ZM1131.8 208.7L1142.3 206.6L1119.2 195.3ZM1120.2 212.3L1119.2 195.3L1131.8 208.7ZM1120.2 212.3L1131.8 208.7L1132.8 227.5ZM1120.2 212.3L1132.8 227.5L1121.4 233.5ZM1120.2 212.3L1109.1 217.4L1121.4 233.5ZM1012.2 177.5L1012.5 166.3L1001.2 174.2ZM1012.2 177.5L1012.5 166.3L1025.0 169.3ZM1034.8 230.1L1047.5 218.0L1060.5 229.9ZM1034.8 230.1L1047.6 243.0L1060.5 229.9ZM999.7 186.7L988.7 183.8L1012.2 177.5ZM999.7 186.7L1012.2 177.5L1011.4 192.4ZM999.7 186.7L987.8 198.5L1011.4 192.4ZM1023.4 219.1L1011.8 210.1L998.7 224.6ZM1023.4 219.1L1011.8 210.1L1035.3 207.8ZM1023.4 219.1L1034.8 230.1L1047.5 218.0ZM999.3 203.5L987.8 198.5L1011.4 192.4ZM999.3 203.5L1022.7 199.1L1011.4 192.4ZM999.3 203.5L1011.8 210.1L1022.7 199.1Z" fill="#007000" stroke="#007000" stroke-width="0.6"/>
<path d="M1047.5 158.6L1059.9 163.6L1035.9 163.6ZM1071.4 160.1L1059.4 155.6L1059.9 163.6ZM1047.5 158.6L1059.4 155.6L1059.9 163.6ZM1035.9 163.6L1025.0 169.3L1047.8 168.0ZM1047.8 168.0L1059.9 163.6L1035.9 163.6ZM1082.7 166.0L1071.4 160.1L1059.9 163.6ZM1082.2 158.7L1082.7 166.0L1094.0 165.0ZM1082.2 158.7L1082.7 166.0L1071.4 160.1ZM1107.6 198.5L1096.3 204.2L1120.2 212.3ZM1097.7 225.4L1085.0 233.9L1084.6 210.2ZM1072.8 219.8L1060.5 229.9L1085.0 233.9ZM1094.0 165.0L1105.3 172.5L1082.7 166.0ZM1095.1 174.1L1105.3 172.5L1082.7 166.0ZM1107.3 183.8L1096.6 187.4L1119.2 195.3ZM1105.3 172.5L1118.9 182.6L1095.1 174.1ZM1107.3 183.8L1118.9 182.6L1095.1 174.1ZM1107.6 198.5L1096.6 187.4L1119.2 195.3ZM1118.9 182.6L1130.5 193.9L1107.3 183.8ZM1119.2 195.3L1130.5 193.9L1107.3 183.8ZM1109.1 217.4L1096.3 204.2L1120.2 212.3ZM1120.2 212.3L1119.2 195.3L1107.6 198.5ZM1072.8 219.8L1085.0 233.9L1084.6 210.2ZM1084.6 210.2L1109.1 217.4L1097.7 225.4ZM1084.6 210.2L1109.1 217.4L1096.3 204.2ZM1047.5 218.0L1072.8 219.8L1060.5 229.9ZM1036.0 174.4L1025.0 169.3L1047.8 168.0ZM1036.0 174.4L1025.0 169.3L1023.8 182.7ZM1035.4 189.2L1022.7 199.1L1023.8 182.7ZM1012.2 177.5L1025.0 169.3L1023.8 182.7ZM1011.4 192.4L1022.7 199.1L1023.8 182.7ZM1023.8 182.7L1012.2 177.5L1011.4 192.4ZM1011.8 210.1L1022.7 199.1L1035.3 207.8ZM1059.8 207.9L1047.5 218.0L1072.8 219.8ZM1059.8 207.9L1047.5 218.0L1035.3 207.8ZM1023.4 219.1L1047.5 218.0L1035.3 207.8ZM1022.7 199.1L1035.3 207.8L1035.4 189.2Z" fill="#007200" stroke="#007200" stroke-width="0.6"/>
<path d="M1060.0 174.3L1059.9 163.6L1047.8 168.0ZM1060.0 174.3L1083.7 177.6L1071.9 182.4ZM1048.1 180.9L1060.0 174.3L1071.9 182.4ZM1095.1 174.1L1096.6 187.4L1083.7 177.6ZM1071.1 169.3L1082.7 166.0L1059.9 163.6ZM1071.1 169.3L1060.0 174.3L1059.9 163.6ZM1071.1 169.3L1060.0 174.3L1083.7 177.6ZM1071.1 169.3L1095.1 174.1L1083.7 177.6ZM1071.1 169.3L1095.1 174.1L1082.7 166.0ZM1107.3 183.8L1095.1 174.1L1096.6 187.4ZM1107.6 198.5L1096.6 187.4L1096.3 204.2ZM1083.9 191.6L1096.6 187.4L1096.3 204.2ZM1083.7 177.6L1071.9 182.4L1096.6 187.4ZM1083.9 191.6L1071.9 182.4L1096.6 187.4ZM1060.0 174.3L1047.8 168.0L1048.1 180.9ZM1036.0 174.4L1047.8 168.0L1048.1 180.9ZM1072.4 198.8L1083.9 191.6L1096.3 204.2ZM1072.4 198.8L1084.6 210.2L1096.3 204.2ZM1023.8 182.7L1048.1 180.9L1035.4 189.2ZM1023.8 182.7L1036.0 174.4L1048.1 180.9ZM1083.9 191.6L1071.9 182.4L1072.4 198.8ZM1060.3 189.4L1071.9 182.4L1072.4 198.8ZM1060.3 189.4L1048.1 180.9L1071.9 182.4ZM1060.3 189.4L1048.1 180.9L1048.3 198.0ZM1059.8 207.9L1084.6 210.2L1072.8 219.8ZM1059.8 207.9L1072.4 198.8L1084.6 210.2ZM1072.4 198.8L1060.3 189.4L1059.8 207.9ZM1048.3 198.0L1060.3 189.4L1059.8 207.9ZM1035.4 189.2L1048.1 180.9L1048.3 198.0ZM1048.3 198.0L1059.8 207.9L1035.3 207.8ZM1048.3 198.0L1035.3 207.8L1035.4 189.2Z" fill="#007400" stroke="#007400" stroke-width="0.6"/>
</g>
<path d="M1144.9 423.8L1124.3 438.1M987.8 198.5L977.0 195.2M1178.1 296.8L1169.6 305.2M1037.1 151.3L1025.0 154.5M987.8 198.5L986.9 217.5M1175.6 229.9L1186.7 252.2M1199.9 278.9L1197.2 265.7M934.0 407.6L934.7 408.0M1058.8 340.2L1036.4 340.4M925.5 233.7L924.7 252.1M1093.5 158.9L1070.8 154.3M973.5 416.7L958.9 410.3M922.9 321.4L933.1 328.6M1116.8 172.4L1128.7 182.2M1024.2 388.9L1023.3 403.5M1172.5 279.7L1165.0 261.5M1178.7 228.4L1175.6 229.9M1025.7 456.8L1035.1 456.3M1201.0 289.6L1197.5 285.1M1008.2 355.7L986.7 368.3M930.6 261.1L939.3 269.2M1191.9 334.1L1183.9 329.1M1170.8 388.9L1156.7 406.8M954.4 386.1L941.6 379.6M1037.1 151.3L1036.3 155.6M1097.1 439.7L1080.1 442.9M929.3 398.9L925.0 388.8M1016.9 443.4L1010.8 434.6M1002.0 164.6L1001.2 174.2M1090.7 371.7L1070.2 375.0M1110.1 368.3L1090.7 371.7M895.9 279.5L893.8 304.2M1149.6 403.8L1132.6 420.8M1186.0 239.6L1193.5 258.3M1107.3 420.2L1085.1 434.6M1085.1 434.6L1064.3 436.9M934.7 408.0L945.0 416.5M1185.0 288.1L1172.5 279.7M1126.0 404.2L1126.9 391.8M1016.9 443.4L992.5 430.8M1011.8 210.1L999.3 203.5M1071.9 450.4L1058.7 445.7M1127.6 306.8L1103.7 292.6M1080.7 453.5L1075.4 455.4M983.6 444.0L971.2 437.9M1190.2 279.2L1194.0 295.4M902.9 269.1L898.7 285.4M1113.7 165.0L1115.6 167.0M1107.3 183.8L1096.6 187.4M961.4 324.9L948.2 319.5M1026.4 374.8L1005.6 371.9M1110.6 383.4L1092.4 387.2M1165.7 344.2L1162.8 329.6M1109.0 268.9L1095.1 277.0M1193.5 258.3L1192.9 268.9M911.0 287.6L907.0 304.9M898.6 266.0L902.5 257.9M1109.9 241.2L1097.4 250.1M909.3 371.2L909.8 370.8M1071.9 450.4L1060.5 456.2M1127.1 378.3L1125.3 363.1M1197.5 285.1L1199.8 300.1M983.0 435.7L962.6 420.5M1162.7 210.7L1164.8 224.0M934.5 396.0L931.6 384.7M1081.1 154.1L1069.7 151.7M1069.3 427.0L1071.7 416.4M893.8 304.2L895.2 314.4M917.2 228.2L909.2 251.8M991.9 161.0L990.7 165.2M1173.2 217.3L1160.5 201.3M1092.3 413.3L1088.6 424.8M958.1 341.9L954.8 356.9M940.5 365.7L941.6 379.6M894.8 290.2L895.2 314.4M977.5 426.0L973.5 416.7M1094.6 316.3L1100.5 334.9M940.3 194.0L927.0 208.7M1107.3 183.8L1119.2 195.3M1060.5 229.9L1047.6 243.0M1194.6 350.6L1194.5 350.0M1048.1 180.9L1035.4 189.2M1047.6 243.0L1035.7 258.2M929.6 359.4L920.4 364.6M1047.5 437.0L1026.8 426.9M1047.4 150.2L1037.1 151.3M895.2 314.4L898.8 325.1M899.6 310.8L904.8 319.6M901.5 350.3L904.6 346.9M960.0 430.8L942.2 416.5M1173.2 217.3L1162.7 210.7M927.0 399.8L934.7 408.0M920.1 243.3L911.8 261.9M1172.5 279.7L1164.0 287.1M1004.0 386.6L985.3 382.6M905.7 279.2L901.5 295.1M939.3 269.2L949.9 276.2M897.6 274.7L896.1 299.8M1047.4 375.7L1026.4 374.8M1008.2 355.7L990.1 351.9M1047.5 455.6L1048.3 451.8M1132.8 227.5L1120.2 212.3M1096.6 187.4L1107.6 198.5M909.8 370.8L917.0 380.6M1001.2 174.2L978.2 182.0M1166.0 372.6L1153.0 392.2M975.9 211.7L963.3 227.6M959.0 178.8L957.2 184.1M1151.0 336.6L1138.5 341.7M1003.0 158.9L1002.0 164.6M1006.8 424.9L1004.2 413.6M1022.5 319.4L1002.1 316.8M927.0 208.7L914.5 227.1M1023.4 219.1L1034.8 230.1M1025.7 456.8L1006.8 452.8M1156.7 406.8L1149.6 403.8M1169.6 305.2L1159.2 313.1M914.5 227.1L917.2 228.2M979.2 172.7L957.2 184.1M1169.0 399.7L1161.4 408.1M1097.7 225.4L1085.0 233.9M1184.7 343.1L1184.1 356.4M950.3 185.2L947.4 188.7M1164.8 224.0L1170.5 234.0M919.4 351.2L920.4 364.6M1048.1 180.9L1060.3 189.4M1125.3 171.0L1115.6 167.0M933.1 328.6L931.1 344.5M1012.2 177.5L988.7 183.8M1115.6 167.0L1103.4 160.8M968.9 378.8L968.9 391.5M970.1 363.2L954.4 373.1M970.3 404.6L958.9 410.3M1004.0 386.6L986.7 368.3M942.1 351.5L931.1 344.5M1004.2 413.6L988.9 420.8M904.1 334.4L911.6 327.5M1164.9 204.6L1149.1 189.2M1153.6 351.6L1151.0 336.6M1036.4 340.4L1022.5 319.4M1189.2 304.2L1178.1 296.8M1174.0 377.3L1164.2 384.8M983.6 311.9L977.5 330.7M1161.1 396.4L1156.7 406.8M907.0 304.9L904.8 319.6M1069.7 151.7L1059.5 151.4M1092.3 413.3L1093.0 400.6M1092.0 156.6L1103.4 160.8M1198.0 339.8L1194.5 350.0M942.7 391.4L941.6 379.6M1073.7 275.6L1062.1 295.9M1001.2 174.2L1012.2 177.5M942.2 416.5L951.5 424.2M983.0 435.7L977.5 426.0M1070.2 375.0L1047.4 375.7M1001.2 174.2L989.7 172.6M972.7 261.5L962.0 282.4M986.9 217.5L963.3 227.6M1162.7 210.7L1141.5 194.3M1060.3 258.3L1048.4 274.1M962.0 282.4L942.3 295.9M1119.1 426.0L1122.8 415.6M929.3 398.9L934.5 396.0M911.6 327.5L919.4 351.2M1022.7 199.1L999.3 203.5M1080.1 442.9L1085.1 434.6M1031.0 436.8L1016.9 443.4M1201.0 289.6L1202.1 303.9M1154.7 365.9L1153.6 351.6M1036.3 155.6L1025.1 160.3M1037.7 445.5L1024.5 450.5M1170.8 388.9L1161.1 396.4M905.7 279.2L911.0 287.6M1164.2 384.8L1153.0 392.2M951.5 424.2L945.0 416.5M941.6 379.6L930.0 372.3M1085.8 261.0L1072.5 244.8M1119.1 426.0L1102.2 431.4M1119.2 195.3L1096.6 187.4M924.7 252.1L916.6 271.0M999.7 186.7L1011.4 192.4M1065.6 358.8L1047.5 358.6M1120.5 437.7L1113.3 435.2M1096.6 187.4L1083.9 191.6M1096.6 187.4L1096.3 204.2M1047.8 168.0L1025.0 169.3M990.1 351.9L986.7 368.3M1199.8 300.1L1196.2 311.5M934.7 408.0L929.3 398.9M1024.2 388.9L1004.0 386.6M1191.1 361.3L1194.5 350.0M897.8 339.4L895.8 327.6M1191.4 347.2L1189.0 360.5M1160.5 201.3L1162.7 210.7M933.5 210.3L917.2 228.2M1047.8 168.0L1035.9 163.6M1070.8 154.3L1047.9 152.6M1126.0 404.2L1111.0 396.3M1065.6 358.8L1047.4 375.7M1197.5 285.1L1194.0 295.4M970.1 363.2L968.9 378.8M901.4 257.4L903.1 253.0M1116.8 172.4L1105.3 172.5M904.1 334.4L910.9 342.9M1105.9 351.7L1086.9 355.1M1035.1 456.3L1024.5 450.5M1082.2 158.7L1059.4 155.6M1084.6 210.2L1097.7 225.4M1194.5 350.0L1185.9 371.4M973.4 348.1L970.1 363.2M1013.7 158.6L1012.5 166.3M1199.9 278.9L1201.0 289.6M1201.0 289.6L1199.8 300.1M952.0 224.7L941.1 242.4M1165.7 344.2L1166.5 359.1M971.2 437.9L951.5 424.2M920.5 390.6L927.0 399.8M920.1 243.3L909.2 251.8M902.9 269.1L911.8 261.9M1069.3 427.0L1047.9 427.8M1192.9 268.9L1194.0 295.4M1141.5 194.3L1118.9 182.6M1024.5 450.5L998.5 440.1M1058.7 445.7L1037.7 445.5M1023.2 276.5L1016.9 286.2M1025.9 151.8L1014.0 154.5M1047.6 303.7L1047.9 320.4M965.4 193.8L953.8 207.5M903.1 253.0L902.5 257.9M1109.1 217.4L1097.7 225.4M983.6 444.0L975.8 437.8M989.5 443.0L975.8 437.8M1170.5 234.0L1163.3 237.7M922.9 321.4L920.3 336.7M1171.5 252.4L1163.3 237.7M1106.5 443.0L1090.2 447.3M1095.1 174.1L1107.3 183.8M909.2 251.8L902.9 269.1M1199.8 300.1L1194.0 295.4M937.1 312.5L933.1 328.6M955.4 423.0L950.7 414.5M1139.8 357.8L1123.3 347.8M954.4 373.1L954.4 386.1M970.3 404.6L954.4 386.1M963.3 227.6L974.6 233.0M982.0 165.0L991.9 161.0M954.8 301.1L961.4 324.9M1192.6 252.4L1193.5 258.3M1064.3 436.9L1047.9 427.8M1047.5 390.2L1024.2 388.9M970.1 363.2L954.8 356.9M1058.8 340.2L1047.5 358.6M1182.2 369.0L1174.0 377.3M1193.5 258.3L1186.7 252.2M1186.0 239.6L1186.7 252.2M1175.9 336.2L1165.7 344.2M898.6 266.0L897.6 274.7M1192.9 268.9L1190.2 279.2M1166.6 399.0L1151.6 415.9M1047.9 427.8L1026.8 426.9M1178.1 296.8L1172.5 279.7M1097.5 449.3L1080.7 453.5M1092.0 156.6L1093.5 158.9M1147.7 318.7L1138.5 341.7M1086.9 355.1L1081.5 338.0M917.9 296.6L926.3 305.2M1164.0 287.1L1159.2 313.1M952.0 224.7L932.5 237.4M911.0 287.6L917.9 296.6M1171.5 252.4L1165.0 261.5M1002.0 164.6L989.7 172.6M1072.4 198.8L1059.8 207.9M975.8 437.8L968.2 429.8M1060.3 258.3L1047.6 243.0M904.8 247.1L903.1 253.0M1010.9 296.4L1002.1 316.8M910.9 342.9L919.4 351.2M1070.0 456.8L1060.5 456.2M1059.5 151.4L1070.8 154.3M922.3 218.0L917.2 228.2M904.8 247.1L902.5 257.9M925.5 233.7L920.1 243.3M1080.1 442.9L1071.9 450.4M932.5 237.4L941.1 242.4M1137.1 179.0L1127.2 174.6M1194.0 295.4L1189.2 304.2M942.3 295.9L937.1 312.5M1141.5 372.5L1127.1 378.3M1084.6 210.2L1072.4 198.8M920.1 230.4L920.1 243.3M1181.5 381.2L1175.0 390.2M992.5 430.8L988.9 420.8M1185.0 288.1L1179.3 271.2M1144.4 224.8L1155.1 242.8M894.4 317.4L895.2 314.4M1133.4 431.3L1111.3 444.4M1132.6 420.8L1113.3 435.2M1023.8 182.7L1022.7 199.1M1071.4 160.1L1082.7 166.0M946.1 403.8L942.7 391.4M977.5 330.7L973.4 348.1M1146.1 276.1L1153.8 295.2M920.1 230.4L925.5 233.7M1202.1 303.9L1200.1 327.3M1071.7 416.4L1072.0 403.6M1097.4 250.1L1072.5 244.8M1146.4 413.9L1127.4 429.7M992.9 293.0L983.6 311.9M949.9 276.2L942.3 295.9M894.8 290.2L896.1 299.8M1026.4 374.8L1024.2 388.9M999.7 186.7L988.7 183.8M1197.1 325.1L1196.2 311.5M1162.0 200.9L1156.1 194.5M973.4 348.1L958.1 341.9M1166.5 359.1L1154.7 365.9M973.5 416.7L962.6 420.5M917.0 380.6L925.0 388.8M964.3 208.9L952.0 224.7M1126.9 391.8L1111.0 396.3M1037.7 445.5L1016.9 443.4M985.1 397.5L968.9 391.5M1145.3 248.3L1121.4 233.5M972.7 261.5L960.9 254.4M1146.4 413.9L1132.6 420.8M1047.5 437.0L1047.9 427.8M1142.3 206.6L1119.2 195.3M1183.9 261.5L1179.3 271.2M950.8 247.2L949.9 276.2M1025.0 169.3L1012.2 177.5M1074.9 319.6L1047.9 320.4M1153.9 416.3L1144.9 423.8M944.3 335.2L931.1 344.5M1162.8 329.6L1151.0 336.6M992.9 293.0L975.7 287.9M942.2 416.5L934.7 408.0M942.7 391.4L931.6 384.7M1048.3 198.0L1059.8 207.9M1002.0 164.6L990.7 165.2M1186.0 239.6L1175.6 229.9M1083.7 177.6L1071.9 182.4M927.0 208.7L931.0 204.7M1120.5 437.7L1111.3 444.4M1161.4 408.1L1160.8 408.3M1060.0 174.3L1071.9 182.4M955.9 193.2L942.9 207.8M940.5 365.7L929.6 359.4M1184.1 356.4L1176.3 351.3M916.6 271.0L905.7 279.2M980.7 166.9L968.9 174.7M923.2 279.6L926.3 305.2M1000.4 277.1L1010.9 296.4M1165.0 261.5L1156.3 268.7M941.1 242.4L950.8 247.2M977.0 195.2L975.9 211.7M1146.1 185.5L1125.3 171.0M1084.6 210.2L1059.8 207.9M959.0 178.8L947.4 188.7M1190.2 279.2L1189.2 304.2M1194.0 295.4L1196.2 311.5M1035.3 207.8L1023.4 219.1M1022.5 319.4L1014.4 337.9M1200.6 314.6L1196.3 338.0M939.3 269.2L923.2 279.6M1181.4 227.2L1191.1 247.3M1089.1 452.8L1080.7 453.5M941.1 242.4L930.6 261.1M1082.2 158.7L1071.4 160.1M1035.3 207.8L1022.7 199.1M1120.5 437.7L1127.4 429.7M1181.5 381.2L1179.3 380.1M1116.8 172.4L1118.9 182.6M1109.1 217.4L1121.4 233.5M1084.9 296.9L1079.1 286.5M1160.8 408.3L1151.6 415.9M910.9 342.9L911.6 356.3M917.2 228.2L920.1 230.4M911.0 287.6L913.8 312.6M939.3 269.2L942.3 295.9M1035.7 258.2L1023.2 276.5M1024.2 388.9L1003.7 400.2M988.9 420.8L973.5 416.7M1093.0 400.6L1092.4 387.2M1002.1 316.8L994.2 334.9M1154.7 365.9L1141.9 385.8M986.2 409.3L970.3 404.6M1189.2 304.2L1182.3 313.3M1164.2 384.8L1161.1 396.4M963.3 227.6L960.9 254.4M1003.7 400.2L985.1 397.5M1047.5 218.0L1023.4 219.1M1178.1 296.8L1164.0 287.1M1191.4 347.2L1191.9 334.1M1172.8 321.6L1162.8 329.6M1144.9 423.8L1151.6 415.9M1097.1 439.7L1102.2 431.4M1070.8 154.3L1082.2 158.7M1023.0 244.3L1010.6 233.5M1030.8 357.8L1008.2 355.7M1126.0 404.2L1109.0 409.5M1035.1 456.3L1020.6 455.4M1035.4 189.2L1035.3 207.8M1164.0 287.1L1153.8 295.2M1085.0 233.9L1060.5 229.9M1141.3 301.5L1127.6 306.8M1182.2 369.0L1170.8 388.9M914.6 381.5L909.8 370.8M1175.5 390.5L1175.0 390.2M1095.1 174.1L1083.7 177.6M1153.8 295.2L1159.2 313.1M1005.6 371.9L1004.0 386.6M948.2 319.5L933.1 328.6M1200.1 327.3L1194.5 350.0M1175.9 364.1L1166.0 372.6M1127.1 378.3L1126.9 391.8M1151.6 415.9L1133.4 431.3M898.7 285.4L905.7 279.2M1109.0 268.9L1103.7 292.6M1134.4 254.0L1122.6 261.1M1059.5 151.4L1047.4 150.2M1047.4 375.7L1047.5 390.2M968.9 174.7L957.2 184.1M1102.2 448.5L1111.3 444.4M1153.6 351.6L1141.5 372.5M1060.0 174.3L1048.1 180.9M1111.8 312.3L1100.5 334.9M1105.3 172.5L1095.1 174.1M1160.8 408.3L1144.9 423.8M954.8 301.1L942.3 295.9M1186.0 239.6L1178.7 228.4M1155.1 242.8L1156.3 268.7M1047.9 152.6L1059.4 155.6M927.0 208.7L922.3 218.0M1024.2 415.5L1023.3 403.5M1011.4 192.4L987.8 198.5M899.5 338.5L904.6 346.9M1166.6 399.0L1160.8 408.3M1126.9 391.8L1110.6 383.4M1127.4 429.7L1132.6 420.8M1182.3 313.3L1183.9 329.1M916.6 271.0L917.9 296.6M921.2 390.5L929.3 398.9M1010.0 261.7L986.4 269.4M1014.0 154.5L1025.0 154.5M1119.1 426.0L1107.3 420.2M931.4 223.9L925.5 233.7M1123.3 347.8L1118.4 331.1M1047.5 158.6L1059.9 163.6M1002.1 316.8L983.6 311.9M940.3 194.0L935.5 201.1M1047.6 243.0L1034.8 230.1M1200.1 327.3L1200.6 314.6M1031.0 436.8L1010.8 434.6M1125.3 363.1L1110.1 368.3M1073.7 275.6L1060.3 258.3M1036.4 340.4L1008.2 355.7M1036.4 340.4L1030.8 357.8M1096.6 187.4L1071.9 182.4M1186.7 252.2L1183.9 261.5M1153.9 416.3L1160.8 408.3M1005.9 447.4L998.5 440.1M955.9 398.4L954.4 386.1M947.4 188.7L940.3 194.0M894.4 317.4L895.8 327.6M1132.8 227.5L1145.3 248.3M1189.0 360.5L1179.3 380.1M1025.0 154.5L1013.7 158.6M1048.1 180.9L1048.3 198.0M1107.3 420.2L1109.0 409.5M1093.5 158.9L1104.4 164.8M1083.9 191.6L1096.3 204.2M1164.9 204.6L1173.2 217.3M1022.7 199.1L1011.8 210.1M994.2 334.9L990.1 351.9M1090.2 447.3L1080.1 442.9M1120.2 212.3L1121.4 233.5M1162.7 210.7L1153.5 208.3M934.7 408.0L921.2 390.5M1175.9 364.1L1174.0 377.3M1047.5 218.0L1034.8 230.1M1156.7 406.8L1146.4 413.9M898.8 325.1L904.1 334.4M968.9 378.8L954.4 373.1M985.3 382.6L968.9 391.5M1003.0 158.9L991.9 161.0M1166.6 399.0L1170.8 388.9M973.5 416.7L970.3 404.6M1197.2 265.7L1198.4 275.2M954.8 301.1L937.1 312.5M986.7 368.3L970.1 363.2M1166.0 372.6L1154.7 365.9M1141.3 301.5L1134.0 325.2M997.8 250.4L986.4 269.4M920.1 230.4L909.2 251.8M1074.9 319.6L1062.1 295.9M899.6 310.8L898.8 325.1M1111.0 396.3L1093.0 400.6M994.2 334.9L973.4 348.1M1047.9 445.6L1031.0 436.8M901.2 350.5L901.5 350.3M1153.0 392.2L1140.1 398.6M1025.7 456.8L1020.6 455.4M1095.1 277.0L1073.7 275.6M925.0 388.8L934.5 396.0M1160.5 201.3L1151.0 196.4M1048.4 274.1L1062.1 295.9M970.5 171.0L968.9 174.7M986.7 368.3L973.4 348.1M1060.3 258.3L1035.7 258.2M1023.2 276.5L1000.4 277.1M919.4 351.2L929.6 359.4M933.5 210.3L920.1 230.4M1023.8 182.7L1011.4 192.4M1072.8 219.8L1085.0 233.9M945.0 196.2L942.9 207.8M975.7 287.9L968.0 307.2M1125.3 171.0L1127.2 174.6M971.2 437.9L960.0 430.8M1048.5 404.8L1024.2 388.9M1122.8 415.6L1107.3 420.2M1135.7 431.0L1124.3 438.1M986.9 217.5L974.6 233.0M992.5 430.8L973.5 416.7M952.0 224.7L950.8 247.2M1146.1 276.1L1134.4 254.0M921.9 377.0L931.6 384.7M895.2 314.4L895.8 327.6M1153.5 208.3L1130.5 193.9M1156.3 268.7L1146.1 276.1M1202.1 303.9L1199.8 300.1M1201.5 317.0L1200.1 327.3M1093.5 158.9L1082.2 158.7M1133.9 282.7L1109.0 268.9M1164.8 224.0L1153.9 223.3M1153.6 351.6L1139.8 357.8M983.6 311.9L968.0 307.2M1197.1 325.1L1191.9 334.1M1058.8 340.2L1048.3 340.2M1024.5 450.5L1016.9 443.4M1115.6 167.0L1104.4 164.8M899.6 310.8L907.0 304.9M904.9 361.7L906.6 359.6M953.8 207.5L940.7 224.1M909.8 370.8L906.6 359.6M904.6 346.9L913.5 368.6M1181.5 381.2L1175.5 390.5M1138.5 341.7L1118.4 331.1M1080.7 453.5L1060.5 456.2M988.9 420.8L970.3 404.6M910.1 239.2L909.2 251.8M1201.0 289.6L1198.4 275.2M1162.0 200.9L1168.8 208.7M1095.1 174.1L1071.1 169.3M1131.8 208.7L1120.2 212.3M1059.5 151.4L1047.9 152.6M926.3 305.2L922.9 321.4M1060.5 456.2L1035.1 456.3M1123.3 347.8L1125.3 363.1M1047.5 158.6L1035.9 163.6M975.9 211.7L964.3 208.9M1166.6 399.0L1156.7 406.8M1134.0 325.2L1111.8 312.3M1116.8 172.4L1104.4 164.8M1011.8 210.1L1023.4 219.1M963.3 227.6L952.0 224.7M922.9 321.4L911.6 327.5M1179.3 271.2L1172.5 279.7M1081.5 338.0L1058.8 340.2M1139.7 185.1L1128.7 182.2M911.8 261.9L905.7 279.2M978.2 182.0L966.7 182.6M1048.5 404.8L1023.3 403.5M998.7 224.6L974.6 233.0M1151.0 196.4L1162.7 210.7M970.5 171.0L950.3 185.2M1153.8 295.2L1133.9 282.7M924.7 252.1L911.8 261.9M1003.5 156.7L982.0 165.0M990.7 165.2L979.2 172.7M925.5 233.7L932.5 237.4M1060.3 189.4L1048.3 198.0M998.1 449.2L1005.9 447.4M911.6 327.5L920.3 336.7M1025.1 160.3L1035.9 163.6M955.9 193.2L953.8 207.5M992.5 430.8L977.5 426.0M931.4 223.9L940.7 224.1M1048.1 417.2L1024.2 415.5M944.3 335.2L954.8 356.9M1082.2 158.7L1082.7 166.0M1047.6 458.4L1025.7 456.8M934.0 407.6L927.0 399.8M1153.8 295.2L1147.7 318.7M1105.9 351.7L1100.5 334.9M1128.7 182.2L1118.9 182.6M1153.9 223.3L1144.4 224.8M1090.2 447.3L1097.1 439.7M942.9 207.8L931.4 223.9M1173.2 217.3L1178.7 228.4M1191.4 347.2L1184.1 356.4M1085.0 233.9L1072.5 244.8M998.5 440.1L983.0 435.7M980.7 166.9L990.7 165.2M1138.5 341.7L1134.0 325.2M896.1 299.8L899.6 310.8M1047.9 445.6L1047.5 437.0M1071.2 389.4L1048.5 404.8M1168.8 208.7L1173.2 217.3M926.3 305.2L937.1 312.5M1103.7 292.6L1095.1 277.0M1189.2 304.2L1185.0 288.1M1071.9 450.4L1048.3 451.8M1153.0 392.2L1154.0 379.9M924.7 252.1L930.6 261.1M1166.0 372.6L1154.0 379.9M1121.4 233.5L1122.6 261.1M1197.5 285.1L1192.9 268.9M1151.6 415.9L1140.3 423.1M1035.3 207.8L1011.8 210.1M1013.7 158.6L1025.1 160.3M989.5 443.0L983.0 435.7M1093.5 158.9L1081.8 154.6M955.9 193.2L965.4 193.8M923.2 279.6L917.9 296.6M968.9 378.8L954.4 386.1M1084.9 296.9L1062.1 295.9M968.9 174.7L979.2 172.7M1082.2 158.7L1094.0 165.0M1119.8 288.2L1103.7 292.6M970.5 171.0L980.7 166.9M931.0 204.7L922.3 218.0M1174.0 377.3L1166.0 372.6M1199.9 278.9L1198.4 275.2M1024.2 388.9L1005.6 371.9M941.6 379.6L931.6 384.7M1103.7 292.6L1084.9 296.9M1111.0 396.3L1092.3 413.3M1014.2 453.1L1024.5 450.5M966.7 182.6L965.4 193.8M1153.8 295.2L1141.3 301.5M972.7 261.5L949.9 276.2M1010.8 434.6L1006.8 424.9M1118.9 182.6L1105.3 172.5M1004.0 386.6L985.1 397.5M1109.1 217.4L1084.6 210.2M1048.1 180.9L1036.0 174.4M1125.3 363.1L1110.6 383.4M1164.8 224.0L1142.3 206.6M1048.3 198.0L1035.3 207.8M955.9 398.4L941.6 379.6M1023.4 219.1L1023.0 244.3M1093.0 400.6L1072.0 403.6M1179.3 271.2L1165.0 261.5M1156.3 268.7L1134.4 254.0M1153.5 208.3L1142.3 206.6M1175.5 390.5L1169.0 399.7M1010.0 261.7L997.8 250.4M917.9 296.6L913.8 312.6M896.1 299.8L898.8 325.1M1144.4 224.8L1131.8 208.7M913.8 312.6L922.9 321.4M901.5 295.1L899.6 310.8M1072.4 198.8L1060.3 189.4M1163.3 237.7L1153.9 223.3M1071.1 169.3L1059.9 163.6M1082.7 166.0L1059.9 163.6M1149.1 189.2L1160.5 201.3M1197.1 325.1L1191.4 347.2M1122.6 261.1L1109.0 268.9M1191.1 247.3L1197.2 265.7M1083.7 177.6L1060.0 174.3M986.2 409.3L985.1 397.5M1030.8 357.8L1026.4 374.8M1127.4 429.7L1113.3 435.2M968.9 391.5L954.4 386.1M955.4 423.0L962.6 420.5M933.5 210.3L931.4 223.9M1035.9 163.6L1012.5 166.3M934.0 407.6L942.2 416.5M1130.5 193.9L1107.3 183.8M1194.5 350.0L1189.0 360.5M1065.6 358.8L1058.8 340.2M1191.4 347.2L1184.7 343.1M1047.4 375.7L1024.2 388.9M1196.3 338.0L1189.0 360.5M954.4 373.1L940.5 365.7M1047.9 320.4L1036.4 340.4M978.2 182.0L977.0 195.2M954.8 301.1L948.2 319.5M1036.4 340.4L1014.4 337.9M979.2 172.7L978.2 182.0M979.2 172.7L966.7 182.6M1122.6 261.1L1109.9 241.2M966.7 182.6L955.9 193.2M1153.0 392.2L1149.6 403.8M1151.0 196.4L1139.7 185.1M904.8 247.1L910.1 239.2M1070.8 154.3L1059.4 155.6M1070.2 375.0L1065.6 358.8M901.4 257.4L898.6 266.0M1193.5 258.3L1197.5 285.1M1060.5 229.9L1034.8 230.1M985.3 382.6L970.1 363.2M1127.1 378.3L1110.6 383.4M1072.0 403.6L1048.1 417.2M1048.4 274.1L1023.2 276.5M998.5 440.1L992.5 430.8M983.0 435.7L968.2 429.8M1134.0 325.2L1127.6 306.8M1165.7 344.2L1154.7 365.9M998.7 224.6L986.0 241.0M1072.5 244.8L1073.7 275.6M963.3 227.6L950.8 247.2M958.9 410.3L942.7 391.4M1191.9 334.1L1184.7 343.1M948.2 319.5L944.3 335.2M1026.8 426.9L1004.2 413.6M1192.6 252.4L1186.0 239.6M951.5 424.2L934.7 408.0M1170.8 388.9L1174.0 377.3M1079.1 286.5L1062.1 295.9M1075.4 455.4L1060.5 456.2M898.7 285.4L901.5 295.1M903.1 253.0L898.6 266.0M1097.5 449.3L1089.1 452.8M1048.5 404.8L1047.5 390.2M1071.4 160.1L1059.9 163.6M968.2 429.8L962.6 420.5M916.6 271.0L911.0 287.6M1164.0 287.1L1156.3 268.7M911.8 261.9L916.6 271.0M990.1 351.9L973.4 348.1M933.1 328.6L920.3 336.7M1100.5 334.9L1086.9 355.1M998.1 449.2L983.6 444.0M1132.8 227.5L1121.4 233.5M941.6 379.6L929.6 359.4M1012.2 177.5L999.7 186.7M914.5 227.1L910.1 239.2M939.3 269.2L932.2 287.9M927.0 208.7L935.5 201.1M979.2 172.7L989.7 172.6M1133.9 282.7L1119.8 288.2M1059.8 207.9L1035.3 207.8M997.8 250.4L972.7 261.5M1189.0 360.5L1184.1 356.4M1172.8 321.6L1159.2 313.1M1155.1 242.8L1132.8 227.5M970.5 171.0L959.0 178.8M1085.8 261.0L1095.1 277.0M1109.9 241.2L1109.0 268.9M1023.2 276.5L1034.0 295.8M1189.0 360.5L1182.2 369.0M1060.3 189.4L1059.8 207.9M1200.1 327.3L1196.3 338.0M1092.4 387.2L1071.2 389.4M1140.3 423.1L1127.4 429.7M935.5 201.1L945.0 196.2M1120.5 437.7L1097.5 449.3M1196.2 311.5L1191.9 334.1M1090.7 371.7L1071.2 389.4M1190.2 279.2L1179.3 271.2M954.8 356.9L954.4 373.1M932.2 287.9L942.3 295.9M1082.7 166.0L1071.1 169.3M1069.7 151.7L1081.8 154.6M1006.8 424.9L988.9 420.8M1164.2 384.8L1149.6 403.8M1118.9 182.6L1095.1 174.1M1060.5 229.9L1047.5 218.0M901.5 295.1L907.0 304.9M1119.8 288.2L1109.0 268.9M1103.4 160.8L1093.5 158.9M1147.7 318.7L1134.0 325.2M987.8 198.5L975.9 211.7M1133.9 282.7L1122.6 261.1M1023.0 244.3L1035.7 258.2M1164.8 224.0L1153.5 208.3M998.1 449.2L989.5 443.0M1081.1 154.1L1092.0 156.6M906.6 359.6L904.6 346.9M946.1 403.8L934.5 396.0M1085.1 434.6L1088.6 424.8M1003.5 156.7L991.9 161.0M1059.9 163.6L1035.9 163.6M962.5 431.2L955.4 423.0M1181.4 227.2L1178.7 228.4M1081.1 154.1L1081.8 154.6M1131.8 208.7L1132.8 227.5M1120.5 437.7L1106.5 443.0M1010.8 434.6L992.5 430.8M1006.8 452.8L998.1 449.2M1141.9 385.8L1140.1 398.6M1074.9 319.6L1047.6 303.7M1085.8 261.0L1073.7 275.6M916.6 271.0L923.2 279.6M1060.5 229.9L1060.3 258.3M1149.1 189.2L1139.7 185.1M931.1 344.5L919.4 351.2M1199.8 300.1L1200.6 314.6M1147.7 318.7L1141.3 301.5M1071.1 169.3L1060.0 174.3M1080.7 453.5L1090.2 447.3M1016.9 443.4L998.5 440.1M1146.1 185.5L1137.1 179.0M1184.7 343.1L1175.9 336.2M1113.3 435.2L1097.1 439.7M1047.4 150.2L1025.9 151.8M1048.4 274.1L1047.6 303.7M1097.5 449.3L1090.2 447.3M1036.3 155.6L1013.7 158.6M1182.3 313.3L1175.9 336.2M1080.1 442.9L1058.7 445.7M1048.1 417.2L1023.3 403.5M1048.3 340.2L1036.4 340.4M1048.4 274.1L1035.7 258.2M1126.0 404.2L1122.8 415.6M971.2 437.9L962.5 431.2M1093.0 400.6L1071.2 389.4M895.8 327.6L899.5 338.5M898.8 325.1L899.5 338.5M1107.3 420.2L1092.3 413.3M1123.3 347.8L1105.9 351.7M945.0 416.5L929.3 398.9M1004.0 386.6L1003.7 400.2M1026.4 374.8L1008.2 355.7M1069.3 427.0L1064.3 436.9M1132.6 420.8L1122.8 415.6M1146.4 413.9L1140.3 423.1M1047.9 445.6L1037.7 445.5M941.1 242.4L939.3 269.2M907.0 304.9L911.6 327.5M962.5 431.2L968.2 429.8M999.7 186.7L987.8 198.5M1156.1 194.5L1164.9 204.6M1200.6 314.6L1196.2 311.5M953.8 207.5L952.0 224.7M986.4 269.4L972.7 261.5M1014.0 154.5L1003.0 158.9M906.6 359.6L913.5 368.6M1136.9 410.3L1126.0 404.2M1047.5 158.6L1025.1 160.3M1175.4 243.1L1179.3 271.2M942.1 351.5L940.5 365.7M904.1 334.4L911.6 356.3M1141.9 385.8L1141.5 372.5M1192.9 268.9L1186.7 252.2M1047.5 218.0L1035.3 207.8M1023.3 403.5L1003.7 400.2M898.6 266.0L895.9 279.5M1081.8 154.6L1070.8 154.3M1069.3 427.0L1048.1 417.2M1127.2 174.6L1115.6 167.0M1197.2 265.7L1192.6 252.4M1023.2 276.5L1010.0 261.7M1196.2 311.5L1191.1 320.0M1141.5 194.3L1130.5 193.9M1133.4 431.3L1124.3 438.1M975.8 437.8L983.0 435.7M1047.8 168.0L1036.0 174.4M994.3 448.7L983.6 444.0M1181.4 227.2L1173.2 217.3M1185.9 371.4L1179.3 380.1M1151.6 415.9L1146.4 413.9M1035.7 258.2L1010.0 261.7M1025.0 169.3L1023.8 182.7M962.5 431.2L945.0 416.5M1175.6 229.9L1164.8 224.0M904.8 319.6L911.6 327.5M1189.2 304.2L1183.9 329.1M1071.2 389.4L1047.4 375.7M1097.4 250.1L1085.8 261.0M1200.6 314.6L1197.1 325.1M940.7 224.1L932.5 237.4M1111.3 444.4L1097.5 449.3M1097.4 250.1L1095.1 277.0M1085.1 434.6L1058.7 445.7M1004.2 413.6L986.2 409.3M974.6 233.0L972.7 261.5M1116.8 172.4L1094.0 165.0M1184.7 343.1L1183.9 329.1M1196.2 311.5L1189.2 304.2M931.1 344.5L940.5 365.7M1153.9 416.3L1135.7 431.0M897.8 339.4L901.5 350.3M1151.0 336.6L1139.8 357.8M1138.5 341.7L1139.8 357.8M1100.5 334.9L1074.9 319.6M1107.3 420.2L1102.2 431.4M1072.8 219.8L1060.5 229.9M954.8 356.9L940.5 365.7M1162.8 329.6L1147.7 318.7M1133.4 431.3L1120.5 437.7M902.5 257.9L898.7 285.4M1110.6 383.4L1093.0 400.6M1140.1 398.6L1126.0 404.2M913.5 368.6L921.9 377.0M960.9 254.4L949.9 276.2M948.2 319.5L937.1 312.5M1145.3 248.3L1134.4 254.0M988.9 420.8L986.2 409.3M1005.9 447.4L989.5 443.0M982.0 165.0L970.5 171.0M1170.5 234.0L1153.9 223.3M1184.1 356.4L1174.0 377.3M1104.4 164.8L1082.2 158.7M929.3 398.9L938.2 406.2M985.3 382.6L968.9 378.8M1175.0 390.2L1169.0 399.7M1073.7 275.6L1084.9 296.9M1166.0 372.6L1166.5 359.1M931.1 344.5L929.6 359.4M964.3 208.9L953.8 207.5M1034.8 230.1L1023.0 244.3M1165.7 344.2L1151.0 336.6M1159.2 313.1L1162.8 329.6M907.0 304.9L913.8 312.6M1024.5 450.5L1005.9 447.4M1080.7 453.5L1071.9 450.4M1141.5 372.5L1126.9 391.8M1096.3 204.2L1084.6 210.2M1047.9 152.6L1036.3 155.6M1138.5 341.7L1123.3 347.8M938.2 406.2L934.5 396.0M1011.4 192.4L1022.7 199.1M1151.0 196.4L1141.5 194.3M1006.8 424.9L992.5 430.8M958.9 410.3L946.1 403.8M1109.1 217.4L1109.9 241.2M1092.3 413.3L1072.0 403.6M895.9 279.5L897.6 274.7M986.0 241.0L972.7 261.5M1097.1 439.7L1085.1 434.6M958.1 341.9L944.3 335.2M1003.7 400.2L986.2 409.3M974.6 233.0L960.9 254.4M1047.9 320.4L1022.5 319.4M902.5 257.9L902.9 269.1M1190.2 279.2L1185.0 288.1M904.8 247.1L901.4 257.4M1169.0 399.7L1160.8 408.3M1037.1 151.3L1025.9 151.8M945.0 416.5L938.2 406.2M1058.7 445.7L1064.3 436.9M1191.1 361.3L1185.9 371.4M975.7 287.9L954.8 301.1M945.0 416.5L950.7 414.5M1095.1 277.0L1084.9 296.9M930.6 261.1L916.6 271.0M1026.8 426.9L1006.8 424.9M1102.2 431.4L1085.1 434.6M1048.3 451.8L1037.7 445.5M1100.5 334.9L1081.5 338.0M1047.6 303.7L1034.0 295.8M942.9 207.8L953.8 207.5M1173.2 217.3L1175.6 229.9M925.0 388.8L921.9 377.0M901.2 350.5L897.8 339.4M909.3 371.2L914.6 381.5M1047.5 455.6L1035.1 456.3M1164.0 287.1L1146.1 276.1M1192.6 252.4L1198.4 275.2M1048.1 180.9L1023.8 182.7M1105.3 172.5L1082.7 166.0M1136.9 410.3L1132.6 420.8M931.4 223.9L920.1 230.4M947.4 188.7L945.0 196.2M1058.7 445.7L1048.3 451.8M1004.2 413.6L1003.7 400.2M955.9 193.2L945.0 196.2M942.3 295.9L926.3 305.2M944.3 335.2L942.1 351.5M895.9 279.5L894.8 290.2M921.9 377.0L930.0 372.3M1163.3 237.7L1155.1 242.8M1127.2 174.6L1139.7 185.1M1159.2 313.1L1147.7 318.7M977.5 426.0L962.6 420.5M1194.6 350.6L1191.1 361.3M1109.9 241.2L1097.7 225.4M1008.2 355.7L1005.6 371.9M1140.1 398.6L1136.9 410.3M1094.0 165.0L1082.7 166.0M904.9 361.7L909.8 370.8M1106.5 443.0L1113.3 435.2M1120.2 212.3L1109.1 217.4M1176.3 351.3L1166.5 359.1M942.9 207.8L940.7 224.1M950.3 185.2L959.0 178.8M1191.9 334.1L1191.1 320.0M1109.1 217.4L1096.3 204.2M1110.1 368.3L1105.9 351.7M983.6 444.0L989.5 443.0M1119.1 426.0L1113.3 435.2M911.6 327.5L910.9 342.9M1090.7 371.7L1086.9 355.1M1005.9 447.4L983.0 435.7M1010.9 296.4L992.9 293.0M1123.3 347.8L1110.1 368.3M1073.7 275.6L1048.4 274.1M925.0 388.8L931.6 384.7M1110.1 368.3L1086.9 355.1M962.6 420.5L950.7 414.5M1025.0 169.3L1036.0 174.4M959.0 178.8L968.9 174.7M1149.1 189.2L1151.0 196.4M1142.3 206.6L1144.4 224.8M1113.7 165.0L1103.4 160.8M1012.5 166.3L1001.2 174.2M990.7 165.2L989.7 172.6M1048.3 451.8L1024.5 450.5M895.2 314.4L899.5 338.5M950.3 185.2L940.3 194.0M952.0 224.7L940.7 224.1M1118.9 182.6L1130.5 193.9M913.5 368.6L911.6 356.3M1175.9 336.2L1176.3 351.3M1071.7 416.4L1048.1 417.2M1111.8 312.3L1118.4 331.1M1144.4 224.8L1132.8 227.5M1144.9 423.8L1135.7 431.0M980.7 166.9L979.2 172.7M1119.8 288.2L1127.6 306.8M1175.9 336.2L1162.8 329.6M1006.8 452.8L994.3 448.7M1140.1 398.6L1126.9 391.8M1118.9 182.6L1107.3 183.8M1014.4 337.9L994.2 334.9M1182.3 313.3L1172.8 321.6M1191.1 247.3L1186.0 239.6M1137.1 179.0L1125.3 171.0M1139.7 185.1L1141.5 194.3M968.0 307.2L954.8 301.1M1096.3 204.2L1072.4 198.8M945.0 196.2L933.5 210.3M902.9 269.1L905.7 279.2M1168.8 208.7L1156.1 194.5M895.8 327.6L901.5 350.3M904.1 334.4L904.6 346.9M950.7 414.5L946.1 403.8M1006.8 452.8L1014.2 453.1M1196.3 338.0L1191.4 347.2M948.2 319.5L958.1 341.9M1139.7 185.1L1116.8 172.4M1035.1 456.3L1014.2 453.1M935.5 201.1L931.0 204.7M1090.2 447.3L1071.9 450.4M1086.9 355.1L1058.8 340.2M1010.6 233.5L1010.0 261.7M1131.8 208.7L1119.2 195.3M1175.6 229.9L1162.7 210.7M1002.0 164.6L1012.5 166.3M1113.3 435.2L1102.2 431.4M1001.2 174.2L988.7 183.8M932.2 287.9L926.3 305.2M931.6 384.7L930.0 372.3M1095.1 174.1L1096.6 187.4M983.6 311.9L961.4 324.9M1107.3 420.2L1088.6 424.8M1170.8 388.9L1164.2 384.8M1139.8 357.8L1127.1 378.3M960.0 430.8L951.5 424.2M894.8 290.2L893.8 304.2M1161.4 408.1L1153.9 416.3M1060.5 456.2L1048.3 451.8M1072.0 403.6L1071.2 389.4M957.2 184.1L947.4 188.7M1183.9 261.5L1175.4 243.1M999.3 203.5L987.8 198.5M1070.0 456.8L1047.6 458.4M897.6 274.7L898.7 285.4M1149.1 189.2L1127.2 174.6M1103.4 160.8L1104.4 164.8M1097.7 225.4L1097.4 250.1M999.3 203.5L986.9 217.5M911.6 356.3L920.4 364.6M1130.5 193.9L1119.2 195.3M1119.2 195.3L1120.2 212.3M1084.6 210.2L1085.0 233.9M921.2 390.5L925.0 388.8M1175.6 229.9L1170.5 234.0M988.7 183.8L977.0 195.2M1142.3 206.6L1131.8 208.7M893.8 304.2L894.4 317.4M1141.9 385.8L1126.9 391.8M1096.6 187.4L1083.7 177.6M1048.4 274.1L1034.0 295.8M1069.7 151.7L1070.8 154.3M1016.9 286.2L1010.9 296.4M1175.4 243.1L1171.5 252.4M1026.8 426.9L1010.8 434.6M978.2 182.0L988.7 183.8M1182.3 313.3L1178.1 296.8M1154.7 365.9L1141.5 372.5M1181.4 227.2L1168.8 208.7M1120.2 212.3L1096.3 204.2M1071.1 169.3L1083.7 177.6M1072.0 403.6L1048.5 404.8M1082.7 166.0L1095.1 174.1M1059.4 155.6L1059.9 163.6M1060.5 229.9L1072.5 244.8M1047.5 358.6L1036.4 340.4M1062.1 295.9L1047.6 303.7M998.7 224.6L997.8 250.4M899.6 310.8L904.1 334.4M957.2 184.1L945.0 196.2M1089.1 452.8L1075.4 455.4M1147.7 318.7L1151.0 336.6M1089.1 452.8L1070.0 456.8M935.5 201.1L933.5 210.3M1161.1 396.4L1149.6 403.8M994.2 334.9L977.5 330.7M1175.0 390.2L1160.8 408.3M1184.1 356.4L1175.9 364.1M1141.5 194.3L1153.5 208.3M1086.9 355.1L1065.6 358.8M896.1 299.8L901.5 295.1M1179.3 380.1L1182.2 369.0M909.3 371.2L904.9 361.7M1097.4 250.1L1085.0 233.9M1008.2 355.7L994.2 334.9M1175.4 243.1L1163.3 237.7M1106.5 443.0L1097.5 449.3M1010.9 296.4L983.6 311.9M970.3 404.6L968.9 391.5M1124.3 438.1L1111.3 444.4M1200.1 327.3L1198.0 339.8M920.3 336.7L931.1 344.5M1025.0 169.3L1012.5 166.3M937.1 312.5L922.9 321.4M1126.0 404.2L1107.3 420.2M1048.1 417.2L1048.5 404.8M968.0 307.2L961.4 324.9M1024.2 415.5L1004.2 413.6M1037.1 151.3L1014.0 154.5M902.5 257.9L897.6 274.7M920.1 243.3L924.7 252.1M1013.7 158.6L1002.0 164.6M1012.2 177.5L1023.8 182.7M977.0 195.2L953.8 207.5M1111.0 396.3L1110.6 383.4M1181.5 381.2L1185.9 371.4M1149.6 403.8L1140.1 398.6M920.4 364.6L930.0 372.3M901.5 350.3L906.6 359.6M1074.9 319.6L1058.8 340.2M1047.9 427.8L1048.1 417.2M1023.0 244.3L1010.0 261.7M921.9 377.0L920.4 364.6M1132.6 420.8L1119.1 426.0M1194.5 350.0L1196.3 338.0M917.2 228.2L910.1 239.2M950.7 414.5L938.2 406.2M1025.7 456.8L1014.2 453.1M1154.7 365.9L1154.0 379.9M1146.4 413.9L1149.6 403.8M1010.0 261.7L1000.4 277.1M935.5 201.1L922.3 218.0M1048.3 198.0L1035.4 189.2M1090.7 371.7L1065.6 358.8M1000.4 277.1L986.4 269.4M1036.0 174.4L1023.8 182.7M1170.5 234.0L1175.4 243.1M962.6 420.5L958.9 410.3M932.5 237.4L924.7 252.1M1070.0 456.8L1075.4 455.4M1010.6 233.5L997.8 250.4M1060.0 174.3L1047.8 168.0M1037.7 445.5L1031.0 436.8M985.3 382.6L985.1 397.5M1023.4 219.1L998.7 224.6M1072.5 244.8L1060.3 258.3M1175.9 336.2L1172.8 321.6M1023.3 403.5L1004.2 413.6M1092.0 156.6L1081.8 154.6M1085.1 434.6L1069.3 427.0M958.1 341.9L970.1 363.2M977.0 195.2L965.4 193.8M1185.9 371.4L1189.0 360.5M1134.0 325.2L1118.4 331.1M1146.1 276.1L1122.6 261.1M985.1 397.5L970.3 404.6M1083.9 191.6L1072.4 198.8M1146.1 185.5L1156.1 194.5M1175.9 336.2L1166.5 359.1M921.2 390.5L917.0 380.6M1144.9 423.8L1133.4 431.3M1014.4 337.9L1002.1 316.8M944.3 335.2L933.1 328.6M1104.4 164.8L1094.0 165.0M992.9 293.0L968.0 307.2M1156.1 194.5L1137.1 179.0M1026.8 426.9L1024.2 415.5M1198.4 275.2L1197.5 285.1M1014.2 453.1L1005.9 447.4M1013.7 158.6L1003.0 158.9M1179.3 380.1L1175.0 390.2M1047.4 150.2L1047.9 152.6M1072.8 219.8L1059.8 207.9M1016.9 286.2L1000.4 277.1M1190.2 279.2L1183.9 261.5M998.7 224.6L1010.6 233.5M1058.7 445.7L1047.9 445.6M986.4 269.4L992.9 293.0M904.8 319.6L904.1 334.4M1156.3 268.7L1145.3 248.3M902.5 257.9L909.2 251.8M1111.8 312.3L1084.9 296.9M1023.4 219.1L1010.6 233.5M1031.0 436.8L1026.8 426.9M901.5 350.3L899.5 338.5M1118.4 331.1L1100.5 334.9M1179.3 380.1L1170.8 388.9M1154.0 379.9L1141.9 385.8M1191.1 247.3L1192.6 252.4M910.1 239.2L902.5 257.9M977.0 195.2L964.3 208.9M947.4 188.7L935.5 201.1M1047.9 320.4L1048.3 340.2M1047.4 375.7L1030.8 357.8M989.7 172.6L978.2 182.0M954.4 386.1L940.5 365.7M1113.7 165.0L1125.3 171.0M931.4 223.9L932.5 237.4M904.6 346.9L911.6 356.3M1083.9 191.6L1071.9 182.4M1023.8 182.7L1035.4 189.2M1153.9 223.3L1155.1 242.8M1072.8 219.8L1047.5 218.0M1034.0 295.8L1022.5 319.4M970.3 404.6L955.9 398.4M1003.0 158.9L990.7 165.2M1059.4 155.6L1036.3 155.6M1014.4 337.9L1008.2 355.7M1094.6 316.3L1074.9 319.6M972.7 261.5L975.7 287.9M1197.1 325.1L1196.3 338.0M1166.0 372.6L1164.2 384.8M962.5 431.2L951.5 424.2M950.8 247.2L939.3 269.2M1202.1 303.9L1200.6 314.6M1193.5 258.3L1198.4 275.2M1111.0 396.3L1109.0 409.5M898.7 285.4L896.1 299.8M1171.5 252.4L1155.1 242.8M1182.2 369.0L1184.1 356.4M1071.9 182.4L1072.4 198.8M899.5 338.5L904.1 334.4M1186.7 252.2L1175.4 243.1M1146.1 276.1L1133.9 282.7M1070.2 375.0L1071.2 389.4M962.0 282.4L949.9 276.2M1047.5 455.6L1024.5 450.5M1165.7 344.2L1153.6 351.6M1047.5 358.6L1030.8 357.8M1014.0 154.5L1003.5 156.7M1127.2 174.6L1116.8 172.4M1127.6 306.8L1111.8 312.3M1156.1 194.5L1149.1 189.2M1059.4 155.6L1047.5 158.6M1048.1 417.2L1026.8 426.9M1012.5 166.3L1012.2 177.5M1069.7 151.7L1047.4 150.2M1168.8 208.7L1164.9 204.6M1103.7 292.6L1111.8 312.3M1141.5 194.3L1128.7 182.2M1123.3 347.8L1100.5 334.9M930.6 261.1L923.2 279.6M1107.6 198.5L1096.3 204.2M1164.9 204.6L1160.5 201.3M1014.2 453.1L998.1 449.2M901.5 295.1L911.0 287.6M1102.2 448.5L1089.1 452.8M955.9 398.4L942.7 391.4M957.2 184.1L955.9 193.2M901.2 350.5L904.9 361.7M1153.0 392.2L1141.9 385.8M975.9 211.7L952.0 224.7M962.0 282.4L954.8 301.1M1011.8 210.1L998.7 224.6M1090.7 371.7L1092.4 387.2M933.5 210.3L942.9 207.8M1071.9 182.4L1060.3 189.4M1094.0 165.0L1105.3 172.5M913.8 312.6L911.6 327.5M1141.5 372.5L1139.8 357.8M1059.9 163.6L1060.0 174.3M917.0 380.6L913.5 368.6M1047.5 437.0L1031.0 436.8M1036.3 155.6L1025.0 154.5M975.9 211.7L986.9 217.5M914.5 227.1L904.8 247.1M1110.1 368.3L1092.4 387.2M1073.7 275.6L1079.1 286.5M1035.9 163.6L1025.0 169.3M1025.9 151.8L1003.5 156.7M1074.9 319.6L1081.5 338.0M975.8 437.8L962.5 431.2M946.1 403.8L931.6 384.7M909.2 251.8L911.8 261.9M954.8 356.9L942.1 351.5M1071.4 160.1L1059.4 155.6M914.5 227.1L922.3 218.0M1136.9 410.3L1122.8 415.6M1064.3 436.9L1047.5 437.0M1169.6 305.2L1172.8 321.6M920.3 336.7L919.4 351.2M999.7 186.7L977.0 195.2M1059.9 163.6L1047.8 168.0M1175.6 229.9L1175.4 243.1M904.9 361.7L901.5 350.3M1111.3 444.4L1089.1 452.8M1141.3 301.5L1119.8 288.2M1094.6 316.3L1084.9 296.9M1034.0 295.8L1010.9 296.4M961.4 324.9L973.4 348.1M950.7 414.5L958.9 410.3M1106.5 443.0L1097.1 439.7M1036.3 155.6L1047.5 158.6M1175.9 364.1L1176.3 351.3M1133.4 431.3L1140.3 423.1M929.6 359.4L930.0 372.3M950.7 414.5L934.5 396.0M1060.5 456.2L1047.6 458.4M1000.4 277.1L992.9 293.0M920.5 390.6L914.6 381.5M1127.2 174.6L1104.4 164.8M1198.0 339.8L1194.6 350.6M1142.3 206.6L1130.5 193.9M1005.6 371.9L986.7 368.3M1119.2 195.3L1107.6 198.5M1183.9 329.1L1175.9 336.2M1164.0 287.1L1169.6 305.2M1165.0 261.5L1155.1 242.8M1175.0 390.2L1166.6 399.0M986.7 368.3L985.3 382.6M999.3 203.5L998.7 224.6M1124.3 438.1L1102.2 448.5M968.2 429.8L955.4 423.0M1181.4 227.2L1186.0 239.6M1142.3 206.6L1153.9 223.3M1191.1 361.3L1181.5 381.2M1011.4 192.4L999.3 203.5M991.9 161.0L980.7 166.9M1109.0 409.5L1092.3 413.3M897.6 274.7L894.8 290.2M1006.8 452.8L983.6 444.0M978.2 182.0L965.4 193.8M1121.4 233.5L1109.9 241.2M1149.1 189.2L1137.1 179.0M1037.1 151.3L1047.9 152.6M1092.3 413.3L1071.7 416.4M1023.2 276.5L1010.9 296.4M1184.7 343.1L1176.3 351.3M923.2 279.6L932.2 287.9M986.4 269.4L975.7 287.9M1111.8 312.3L1094.6 316.3M1140.3 423.1L1120.5 437.7M1058.8 340.2L1047.9 320.4M1047.8 168.0L1048.1 180.9M1084.9 296.9L1074.9 319.6M1176.3 351.3L1166.0 372.6M925.0 388.8L913.5 368.6M1165.0 261.5L1164.0 287.1M1171.5 252.4L1179.3 271.2M911.6 356.3L921.9 377.0M1047.5 358.6L1047.4 375.7M1139.8 357.8L1125.3 363.1M1151.6 415.9L1156.7 406.8M927.0 399.8L921.2 390.5M1071.9 182.4L1048.1 180.9M1155.1 242.8L1145.3 248.3M911.6 356.3L919.4 351.2M1133.9 282.7L1141.3 301.5M994.3 448.7L971.2 437.9M917.9 296.6L922.9 321.4M1034.0 295.8L1047.9 320.4M1182.3 313.3L1169.6 305.2M975.7 287.9L962.0 282.4M1121.4 233.5L1134.4 254.0M958.9 410.3L955.9 398.4M955.4 423.0L945.0 416.5M1192.9 268.9L1183.9 261.5M986.0 241.0L997.8 250.4M1035.4 189.2L1022.7 199.1M914.6 381.5L917.0 380.6M920.5 390.6L921.2 390.5M1010.9 296.4L1022.5 319.4M933.5 210.3L922.3 218.0M1110.1 368.3L1110.6 383.4M1084.6 210.2L1072.8 219.8M1202.1 303.9L1201.5 317.0M1185.0 288.1L1178.1 296.8M974.6 233.0L986.0 241.0M1179.3 380.1L1166.6 399.0M1071.2 389.4L1047.5 390.2M1012.2 177.5L1011.4 192.4M998.7 224.6L986.9 217.5M1034.8 230.1L1035.7 258.2M1025.1 160.3L1012.5 166.3M1149.6 403.8L1136.9 410.3M1191.1 320.0L1183.9 329.1M1060.5 456.2L1047.5 455.6M1059.8 207.9L1047.5 218.0M977.5 330.7L961.4 324.9M961.4 324.9L958.1 341.9M941.1 242.4L924.7 252.1M1107.6 198.5L1120.2 212.3M1088.6 424.8L1069.3 427.0M906.6 359.6L917.0 380.6M950.8 247.2L960.9 254.4M1058.7 445.7L1047.5 437.0M1189.2 304.2L1191.1 320.0M957.2 184.1L966.7 182.6M914.6 381.5L921.2 390.5M1014.0 154.5L1013.7 158.6M1002.1 316.8L977.5 330.7M991.9 161.0L970.5 171.0M1003.5 156.7L1003.0 158.9M896.1 299.8L895.2 314.4M1047.6 458.4L1035.1 456.3M1092.3 413.3L1069.3 427.0M1020.6 455.4L1014.2 453.1M971.2 437.9L975.8 437.8M1097.4 250.1L1109.0 268.9M983.0 435.7L992.5 430.8" stroke="#000" stroke-width="1.0" fill="none" stroke-linecap="round"/>
<circle cx="1047.9" cy="304.3" r="153.6" fill="none" stroke="#021a02" stroke-width="1"/>
<text transform="translate(795.5 145.4) rotate(-21.8) scale(0.79 1)" font-family="Liberation Sans" font-weight="bold" font-size="25" text-anchor="middle" dominant-baseline="central" fill="#000" stroke="#000" stroke-width="0.12">5.0</text>
<text transform="translate(862.1 118.4) rotate(-21.8) scale(0.79 1)" font-family="Liberation Sans" font-weight="bold" font-size="25" text-anchor="middle" dominant-baseline="central" fill="#000" stroke="#000" stroke-width="0.12">2.5</text>
<text transform="translate(922.6 93.8) rotate(-21.8) scale(0.79 1)" font-family="Liberation Sans" font-weight="bold" font-size="25" text-anchor="middle" dominant-baseline="central" fill="#000" stroke="#000" stroke-width="0.12">0.0</text>
<text transform="translate(980.6 71.7) rotate(-21.8) scale(0.79 1)" font-family="Liberation Sans" font-weight="bold" font-size="25" text-anchor="middle" dominant-baseline="central" fill="#000" stroke="#000" stroke-width="0.12">-2.5</text>
<text transform="translate(1032.2 51.7) rotate(-21.8) scale(0.79 1)" font-family="Liberation Sans" font-weight="bold" font-size="25" text-anchor="middle" dominant-baseline="central" fill="#000" stroke="#000" stroke-width="0.12">-5.0</text>
<text transform="translate(901.9 55.9) rotate(-17.5) scale(0.83 1)" font-family="Liberation Sans" font-weight="bold" font-size="24" text-anchor="middle" dominant-baseline="central" fill="#000" stroke="#000" stroke-width="0.12">X Axis</text>
<text transform="translate(778.7 169) rotate(-98.5) scale(0.8 1)" font-family="Liberation Sans" font-weight="bold" font-size="25" text-anchor="middle" dominant-baseline="central" fill="#000" stroke="#000" stroke-width="0.12">5.0</text>
<text transform="translate(789.1 240.7) rotate(-98.5) scale(0.8 1)" font-family="Liberation Sans" font-weight="bold" font-size="25" text-anchor="middle" dominant-baseline="central" fill="#000" stroke="#000" stroke-width="0.12">2.5</text>
<text transform="translate(798.9 305.6) rotate(-98.5) scale(0.8 1)" font-family="Liberation Sans" font-weight="bold" font-size="25" text-anchor="middle" dominant-baseline="central" fill="#000" stroke="#000" stroke-width="0.12">0.0</text>
<text transform="translate(808.0 365.5) rotate(-98.5) scale(0.8 1)" font-family="Liberation Sans" font-weight="bold" font-size="25" text-anchor="middle" dominant-baseline="central" fill="#000" stroke="#000" stroke-width="0.12">-2.5</text>
<text transform="translate(816.2 420.8) rotate(-98.5) scale(0.8 1)" font-family="Liberation Sans" font-weight="bold" font-size="25" text-anchor="middle" dominant-baseline="central" fill="#000" stroke="#000" stroke-width="0.12">-5.0</text>
<text transform="translate(758.6 307.3) rotate(-98.5) scale(0.83 1)" font-family="Liberation Sans" font-weight="bold" font-size="24" text-anchor="middle" dominant-baseline="central" fill="#000" stroke="#000" stroke-width="0.12">Z Axis</text>
<text transform="translate(833.9 446.2) rotate(41.0) scale(0.78 1)" font-family="Liberation Sans" font-weight="bold" font-size="25" text-anchor="middle" dominant-baseline="central" fill="#000" stroke="#000" stroke-width="0.12">-5.0</text>
<text transform="translate(877.3 482.6) rotate(41.0) scale(0.78 1)" font-family="Liberation Sans" font-weight="bold" font-size="25" text-anchor="middle" dominant-baseline="central" fill="#000" stroke="#000" stroke-width="0.12">-2.5</text>
<text transform="translate(922.9 517) rotate(41.0) scale(0.78 1)" font-family="Liberation Sans" font-weight="bold" font-size="25" text-anchor="middle" dominant-baseline="central" fill="#000" stroke="#000" stroke-width="0.12">0.0</text>
<text transform="translate(974.6 558.7) rotate(41.0) scale(0.78 1)" font-family="Liberation Sans" font-weight="bold" font-size="25" text-anchor="middle" dominant-baseline="central" fill="#000" stroke="#000" stroke-width="0.12">2.5</text>
<text transform="translate(903.7 550.4) rotate(42.5) scale(0.865 1)" font-family="Liberation Sans" font-weight="bold" font-size="24" text-anchor="middle" dominant-baseline="central" fill="#000" stroke="#000" stroke-width="0.12">Y Axis</text>
</g>
</svg>
</body></html>
